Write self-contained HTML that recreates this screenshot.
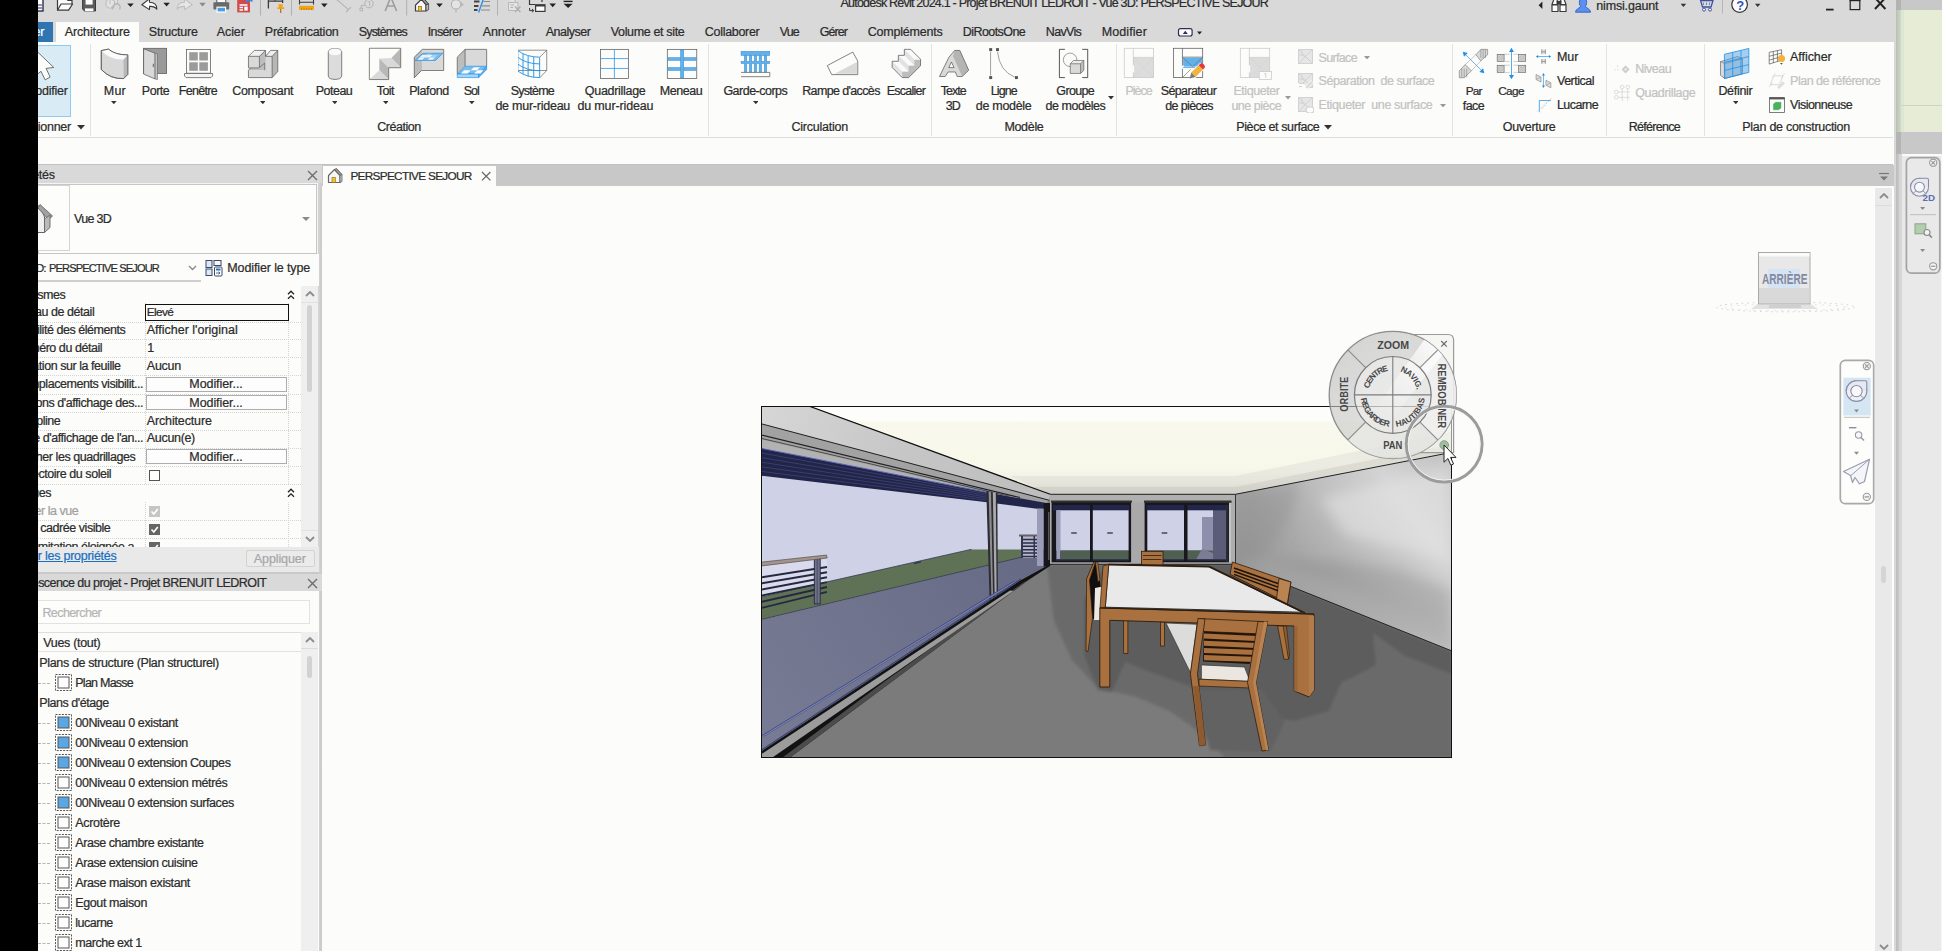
<!DOCTYPE html>
<html><head><meta charset="utf-8"><title>Revit</title>
<style>
html,body{margin:0;padding:0;}
body{width:1942px;height:951px;overflow:hidden;position:relative;background:#fcfcfa;font-family:"Liberation Sans",sans-serif;}
div,svg,span{position:absolute;}
.t{white-space:pre;line-height:16px;height:16px;-webkit-text-stroke:0.22px currentColor;}
</style></head><body>
<div style="left:0px;top:0px;width:1896px;height:42px;background:#d9d9d9;"></div>
<div style="left:1896px;top:0px;width:46px;height:10px;background:#c8c8c8;"></div>
<div style="left:1896px;top:0px;width:5px;height:10px;background:#b2b2b2;"></div>
<div style="left:1896px;top:10px;width:46px;height:122px;background:#e7ecd7;"></div>
<div style="left:1896px;top:10px;width:5px;height:122px;background:linear-gradient(90deg,#b3c2ae,#d3d8cb);"></div>
<div style="left:1901px;top:10px;width:3px;height:122px;background:#dde6d2;"></div>
<div style="left:1901px;top:104.6px;width:41px;height:1px;background:#cfd3c6;"></div>
<div style="left:1896px;top:132px;width:46px;height:22px;background:#c8c8c8;"></div>
<div style="left:1896px;top:132px;width:5px;height:22px;background:#b4b4b4;"></div>
<div style="left:1896px;top:154px;width:46px;height:797px;background:#e9e9e9;"></div>
<div style="left:1901px;top:154px;width:41px;height:1.6px;background:#fbfbfb;"></div>
<div style="left:1893.6px;top:42px;width:2.6px;height:909px;background:#d8d8d8;"></div>
<div style="left:1896px;top:154px;width:3.2px;height:797px;background:linear-gradient(90deg,#bcbcbc,#c9c9c9);"></div>
<div style="left:1899.2px;top:154px;width:2.8px;height:797px;background:#d6d6d6;"></div>
<div style="left:1941px;top:154px;width:1px;height:797px;background:#f6f6f6;"></div>
<div style="left:38px;top:42px;width:1855px;height:95px;background:#fcfcfa;"></div>
<div style="left:38px;top:137px;width:1855px;height:1px;background:#dcdcdc;"></div>
<div style="left:38px;top:138px;width:1855px;height:26px;background:#fcfcfa;"></div>
<div style="left:56px;top:22px;width:83px;height:21px;background:#fcfcfa;"></div>
<div style="left:38px;top:22px;width:15px;height:20px;background:#2e75b2;"></div>
<span class="t" style="left:33.5px;top:24.0px;font-size:12.5px;color:#fff;letter-spacing:-0.25px;">er</span>
<span class="t" style="left:64.8px;top:23.5px;font-size:12.5px;color:#2b2b2b;letter-spacing:-0.15px;">Architecture</span>
<span class="t" style="left:148.8px;top:23.5px;font-size:12.5px;color:#2b2b2b;letter-spacing:-0.21px;">Structure</span>
<span class="t" style="left:216.8px;top:23.5px;font-size:12.5px;color:#2b2b2b;letter-spacing:-0.12px;">Acier</span>
<span class="t" style="left:264.8px;top:23.5px;font-size:12.5px;color:#2b2b2b;letter-spacing:-0.24px;">Préfabrication</span>
<span class="t" style="left:358.8px;top:23.5px;font-size:12.5px;color:#2b2b2b;letter-spacing:-0.84px;">Systèmes</span>
<span class="t" style="left:427.8px;top:23.5px;font-size:12.5px;color:#2b2b2b;letter-spacing:-0.65px;">Insérer</span>
<span class="t" style="left:482.8px;top:23.5px;font-size:12.5px;color:#2b2b2b;letter-spacing:-0.13px;">Annoter</span>
<span class="t" style="left:545.8px;top:23.5px;font-size:12.5px;color:#2b2b2b;letter-spacing:-0.52px;">Analyser</span>
<span class="t" style="left:610.8px;top:23.5px;font-size:12.5px;color:#2b2b2b;letter-spacing:-0.35px;">Volume et site</span>
<span class="t" style="left:704.8px;top:23.5px;font-size:12.5px;color:#2b2b2b;letter-spacing:-0.30px;">Collaborer</span>
<span class="t" style="left:779.8px;top:23.5px;font-size:12.5px;color:#2b2b2b;letter-spacing:-0.89px;">Vue</span>
<span class="t" style="left:819.8px;top:23.5px;font-size:12.5px;color:#2b2b2b;letter-spacing:-0.99px;">Gérer</span>
<span class="t" style="left:867.8px;top:23.5px;font-size:12.5px;color:#2b2b2b;letter-spacing:-0.21px;">Compléments</span>
<span class="t" style="left:962.8px;top:23.5px;font-size:12.5px;color:#2b2b2b;letter-spacing:-0.57px;">DiRootsOne</span>
<span class="t" style="left:1045.8px;top:23.5px;font-size:12.5px;color:#2b2b2b;letter-spacing:-0.68px;">NavVis</span>
<span class="t" style="left:1101.8px;top:23.5px;font-size:12.5px;color:#2b2b2b;letter-spacing:0.08px;">Modifier</span>
<span class="t" style="left:840.5px;top:-4.8px;font-size:12.5px;color:#2b2b2b;letter-spacing:-0.78px;">Autodesk Revit 2024.1 - Projet BRENUIT LEDROIT - Vue 3D: PERSPECTIVE SEJOUR</span>
<span class="t" style="left:1596.3px;top:-2.5px;font-size:12.5px;color:#2b2b2b;letter-spacing:-0.17px;">nimsi.gaunt</span>
<div style="left:90.0px;top:44px;width:1px;height:92px;background:#e3e3e3;"></div>
<div style="left:708.0px;top:44px;width:1px;height:92px;background:#e3e3e3;"></div>
<div style="left:931.0px;top:44px;width:1px;height:92px;background:#e3e3e3;"></div>
<div style="left:1116.0px;top:44px;width:1px;height:92px;background:#e3e3e3;"></div>
<div style="left:1452.0px;top:44px;width:1px;height:92px;background:#e3e3e3;"></div>
<div style="left:1606.0px;top:44px;width:1px;height:92px;background:#e3e3e3;"></div>
<div style="left:1704.0px;top:44px;width:1px;height:92px;background:#e3e3e3;"></div>
<div style="left:38px;top:45px;width:33px;height:72px;background:#d9ebf4;border:1px solid #8ecbee;box-sizing:border-box;border-left:none;"></div>
<span class="t" style="left:25.1px;top:83.0px;font-size:12.5px;color:#2b2b2b;letter-spacing:-0.25px;">Modifier</span>
<span class="t" style="left:4.5px;top:119.0px;font-size:12.5px;color:#2b2b2b;letter-spacing:-0.25px;">Sélectionner</span>
<span class="t" style="left:103.8px;top:83.0px;font-size:12.5px;color:#2b2b2b;letter-spacing:0.23px;">Mur</span>
<svg style="left:111.2px;top:100.9px" width="5.6" height="3.2"><path d="M0 0H5.6L2.8 3.2Z" fill="#333"/></svg>
<span class="t" style="left:141.8px;top:83.0px;font-size:12.5px;color:#2b2b2b;letter-spacing:-0.47px;">Porte</span>
<span class="t" style="left:178.8px;top:83.0px;font-size:12.5px;color:#2b2b2b;letter-spacing:-0.68px;">Fenêtre</span>
<span class="t" style="left:232.2px;top:83.0px;font-size:12.5px;color:#2b2b2b;letter-spacing:-0.32px;">Composant</span>
<svg style="left:259.7px;top:100.9px" width="5.6" height="3.2"><path d="M0 0H5.6L2.8 3.2Z" fill="#333"/></svg>
<span class="t" style="left:315.8px;top:83.0px;font-size:12.5px;color:#2b2b2b;letter-spacing:-0.53px;">Poteau</span>
<svg style="left:331.7px;top:100.9px" width="5.6" height="3.2"><path d="M0 0H5.6L2.8 3.2Z" fill="#333"/></svg>
<span class="t" style="left:376.8px;top:83.0px;font-size:12.5px;color:#2b2b2b;letter-spacing:-0.62px;">Toit</span>
<svg style="left:382.7px;top:100.9px" width="5.6" height="3.2"><path d="M0 0H5.6L2.8 3.2Z" fill="#333"/></svg>
<span class="t" style="left:409.2px;top:83.0px;font-size:12.5px;color:#2b2b2b;letter-spacing:-0.40px;">Plafond</span>
<span class="t" style="left:463.8px;top:83.0px;font-size:12.5px;color:#2b2b2b;letter-spacing:-1.04px;">Sol</span>
<svg style="left:469.2px;top:100.9px" width="5.6" height="3.2"><path d="M0 0H5.6L2.8 3.2Z" fill="#333"/></svg>
<span class="t" style="left:510.8px;top:83.0px;font-size:12.5px;color:#2b2b2b;letter-spacing:-0.77px;">Système</span>
<span class="t" style="left:495.4px;top:98.0px;font-size:12.5px;color:#2b2b2b;letter-spacing:-0.24px;">de mur-rideau</span>
<span class="t" style="left:584.8px;top:83.0px;font-size:12.5px;color:#2b2b2b;letter-spacing:-0.29px;">Quadrillage</span>
<span class="t" style="left:577.4px;top:98.0px;font-size:12.5px;color:#2b2b2b;letter-spacing:-0.14px;">du mur-rideau</span>
<span class="t" style="left:659.8px;top:83.0px;font-size:12.5px;color:#2b2b2b;letter-spacing:-0.44px;">Meneau</span>
<span class="t" style="left:723.4px;top:83.0px;font-size:12.5px;color:#2b2b2b;letter-spacing:-0.51px;">Garde-corps</span>
<svg style="left:752.7px;top:100.9px" width="5.6" height="3.2"><path d="M0 0H5.6L2.8 3.2Z" fill="#333"/></svg>
<span class="t" style="left:802.2px;top:83.0px;font-size:12.5px;color:#2b2b2b;letter-spacing:-0.63px;">Rampe d&#x27;accès</span>
<span class="t" style="left:886.8px;top:83.0px;font-size:12.5px;color:#2b2b2b;letter-spacing:-0.78px;">Escalier</span>
<span class="t" style="left:940.8px;top:83.0px;font-size:12.5px;color:#2b2b2b;letter-spacing:-0.97px;">Texte</span>
<span class="t" style="left:945.8px;top:98.0px;font-size:12.5px;color:#2b2b2b;letter-spacing:-0.98px;">3D</span>
<span class="t" style="left:990.8px;top:83.0px;font-size:12.5px;color:#2b2b2b;letter-spacing:-0.90px;">Ligne</span>
<span class="t" style="left:975.8px;top:98.0px;font-size:12.5px;color:#2b2b2b;letter-spacing:-0.30px;">de modèle</span>
<span class="t" style="left:1056.3px;top:83.0px;font-size:12.5px;color:#2b2b2b;letter-spacing:-0.64px;">Groupe</span>
<span class="t" style="left:1045.6px;top:98.0px;font-size:12.5px;color:#2b2b2b;letter-spacing:-0.49px;">de modèles</span>
<svg style="left:1108.0px;top:96.25px" width="6" height="3.5"><path d="M0 0H6L3.0 3.5Z" fill="#333"/></svg>
<span class="t" style="left:1125.5px;top:83.0px;font-size:12.5px;color:#c2c2c2;letter-spacing:-1.02px;">Pièce</span>
<span class="t" style="left:1160.8px;top:83.0px;font-size:12.5px;color:#2b2b2b;letter-spacing:-0.65px;">Séparateur</span>
<span class="t" style="left:1165.3px;top:98.0px;font-size:12.5px;color:#2b2b2b;letter-spacing:-0.65px;">de pièces</span>
<span class="t" style="left:1233.4px;top:83.0px;font-size:12.5px;color:#c2c2c2;letter-spacing:-0.45px;">Etiqueter</span>
<span class="t" style="left:1231.4px;top:98.0px;font-size:12.5px;color:#c2c2c2;letter-spacing:-0.48px;">une pièce</span>
<svg style="left:1284.5px;top:96.25px" width="6" height="3.5"><path d="M0 0H6L3.0 3.5Z" fill="#999"/></svg>
<span class="t" style="left:1318.6px;top:49.5px;font-size:12.5px;color:#c2c2c2;letter-spacing:-0.67px;">Surface</span>
<svg style="left:1363.6px;top:55.75px" width="6" height="3.5"><path d="M0 0H6L3.0 3.5Z" fill="#999"/></svg>
<span class="t" style="left:1318.6px;top:73.0px;font-size:12.5px;color:#c2c2c2;letter-spacing:-0.46px;">Séparation  de surface</span>
<span class="t" style="left:1318.6px;top:97.0px;font-size:12.5px;color:#c2c2c2;letter-spacing:-0.39px;">Etiqueter  une surface</span>
<svg style="left:1440.0px;top:103.75px" width="6" height="3.5"><path d="M0 0H6L3.0 3.5Z" fill="#999"/></svg>
<span class="t" style="left:1465.8px;top:83.0px;font-size:11.8px;color:#2b2b2b;letter-spacing:-0.83px;">Par</span>
<span class="t" style="left:1462.8px;top:98.0px;font-size:12.5px;color:#2b2b2b;letter-spacing:-0.55px;">face</span>
<span class="t" style="left:1498.2px;top:83.0px;font-size:11.8px;color:#2b2b2b;letter-spacing:-0.61px;">Cage</span>
<span class="t" style="left:1557.0px;top:49.0px;font-size:12.5px;color:#2b2b2b;letter-spacing:-0.07px;">Mur</span>
<span class="t" style="left:1557.0px;top:73.0px;font-size:12.5px;color:#2b2b2b;letter-spacing:-0.49px;">Vertical</span>
<span class="t" style="left:1557.0px;top:97.0px;font-size:12.5px;color:#2b2b2b;letter-spacing:-0.58px;">Lucarne</span>
<span class="t" style="left:1635.2px;top:61.0px;font-size:12.5px;color:#c2c2c2;letter-spacing:-0.46px;">Niveau</span>
<span class="t" style="left:1635.2px;top:85.0px;font-size:12.5px;color:#c2c2c2;letter-spacing:-0.33px;">Quadrillage</span>
<span class="t" style="left:1718.4px;top:83.0px;font-size:12.5px;color:#2b2b2b;letter-spacing:-0.30px;">Définir</span>
<svg style="left:1732.6000000000001px;top:100.9px" width="5.6" height="3.2"><path d="M0 0H5.6L2.8 3.2Z" fill="#333"/></svg>
<span class="t" style="left:1790.1px;top:49.0px;font-size:12.5px;color:#2b2b2b;letter-spacing:-0.07px;">Afficher</span>
<span class="t" style="left:1790.1px;top:73.0px;font-size:12.5px;color:#c2c2c2;letter-spacing:-0.51px;">Plan de référence</span>
<span class="t" style="left:1790.1px;top:97.0px;font-size:12.5px;color:#2b2b2b;letter-spacing:-0.53px;">Visionneuse</span>
<svg style="left:76.5px;top:125.25px" width="8" height="4.5"><path d="M0 0H8L4.0 4.5Z" fill="#333"/></svg>
<span class="t" style="left:377.2px;top:119.0px;font-size:12.5px;color:#2b2b2b;letter-spacing:-0.46px;">Création</span>
<span class="t" style="left:791.5px;top:119.0px;font-size:12.5px;color:#2b2b2b;letter-spacing:-0.23px;">Circulation</span>
<span class="t" style="left:1004.4px;top:119.0px;font-size:12.5px;color:#2b2b2b;letter-spacing:-0.32px;">Modèle</span>
<span class="t" style="left:1236.3px;top:119.0px;font-size:12.5px;color:#2b2b2b;letter-spacing:-0.41px;">Pièce et surface</span>
<svg style="left:1324.0px;top:125.25px" width="8" height="4.5"><path d="M0 0H8L4.0 4.5Z" fill="#333"/></svg>
<span class="t" style="left:1502.8px;top:119.0px;font-size:12.5px;color:#2b2b2b;letter-spacing:-0.32px;">Ouverture</span>
<span class="t" style="left:1628.8px;top:119.0px;font-size:12.5px;color:#2b2b2b;letter-spacing:-0.71px;">Référence</span>
<span class="t" style="left:1742.3px;top:119.0px;font-size:12.5px;color:#2b2b2b;letter-spacing:-0.28px;">Plan de construction</span>
<div style="left:38px;top:164px;width:1855px;height:1px;background:#c2c2c2;"></div>
<div style="left:38px;top:165px;width:284px;height:18px;background:#d9d9d9;"></div>
<span class="t" style="left:0.3px;top:167.0px;font-size:12.5px;color:#2b2b2b;letter-spacing:-0.25px;">Propriétés</span>
<div style="left:38px;top:183px;width:281px;height:103px;background:#f4f4f4;"></div>
<div style="left:318px;top:183px;width:4px;height:768px;background:linear-gradient(90deg,#d6d6d6,#c9c9c9);"></div>
<div style="left:38px;top:183.5px;width:279px;height:70px;background:#fdfdfc;border:1px solid #c6c6c6;box-sizing:border-box;"></div>
<div style="left:38px;top:185px;width:32px;height:66px;background:#fdfdfc;border:1px solid #d4d4d4;box-sizing:border-box;border-left:none;"></div>
<span class="t" style="left:74.0px;top:210.7px;font-size:12.5px;color:#2b2b2b;letter-spacing:-0.69px;">Vue 3D</span>
<svg style="left:302.0px;top:217.0px" width="8" height="4"><path d="M0 0H8L4.0 4Z" fill="#8a8a8a"/></svg>
<div style="left:38px;top:254px;width:281px;height:32px;background:#fcfcfa;"></div>
<span class="t" style="left:49.0px;top:259.7px;font-size:11.100000000000001px;color:#2b2b2b;letter-spacing:-0.88px;">PERSPECTIVE SEJOUR</span>
<span class="t" style="left:9.8px;top:259.7px;font-size:11.8px;color:#2b2b2b;letter-spacing:-0.90px;">Vue 3D:</span>
<div style="left:38px;top:279.5px;width:163px;height:2px;background:#cfcfcf;"></div>
<span class="t" style="left:227.3px;top:259.7px;font-size:12.5px;color:#2b2b2b;letter-spacing:-0.12px;">Modifier le type</span>
<div style="left:38px;top:286px;width:263px;height:261px;background:#fcfcfa;"></div>
<div style="left:301px;top:286px;width:17px;height:261px;background:#efefef;"></div>
<div style="left:307px;top:304.5px;width:5px;height:87px;background:#d2d2d2;border-radius:2.5px;"></div>
<div style="left:301px;top:302px;width:17px;height:1px;background:#e2e2e2;"></div>
<div style="left:301px;top:530px;width:17px;height:1px;background:#e2e2e2;"></div>
<span class="t" style="left:11.8px;top:304.3px;font-size:12.5px;color:#2b2b2b;letter-spacing:-0.45px;">Niveau de détail</span>
<span class="t" style="left:12.3px;top:322.2px;font-size:12.5px;color:#2b2b2b;letter-spacing:-0.45px;">Visibilité des éléments</span>
<span class="t" style="left:14.1px;top:339.8px;font-size:12.5px;color:#2b2b2b;letter-spacing:-0.45px;">Numéro du détail</span>
<span class="t" style="left:14.2px;top:358.0px;font-size:12.5px;color:#2b2b2b;letter-spacing:-0.45px;">Rotation sur la feuille</span>
<span class="t" style="left:13.8px;top:376.4px;font-size:12.5px;color:#2b2b2b;letter-spacing:-0.45px;">Remplacements visibilit...</span>
<span class="t" style="left:14.4px;top:394.6px;font-size:12.5px;color:#2b2b2b;letter-spacing:-0.45px;">Options d&#x27;affichage des...</span>
<span class="t" style="left:11.3px;top:412.5px;font-size:12.5px;color:#2b2b2b;letter-spacing:-0.45px;">Discipline</span>
<span class="t" style="left:14.3px;top:430.0px;font-size:12.5px;color:#2b2b2b;letter-spacing:-0.45px;">Style d&#x27;affichage de l&#x27;an...</span>
<span class="t" style="left:14.0px;top:448.5px;font-size:12.5px;color:#2b2b2b;letter-spacing:-0.45px;">Afficher les quadrillages</span>
<span class="t" style="left:12.7px;top:466.4px;font-size:12.5px;color:#2b2b2b;letter-spacing:-0.45px;">Trajectoire du soleil</span>
<span class="t" style="left:2.5px;top:287.0px;font-size:12.5px;color:#2b2b2b;letter-spacing:-0.45px;">Graphismes</span>
<span class="t" style="left:1.9px;top:485.0px;font-size:12.5px;color:#2b2b2b;letter-spacing:-0.45px;">Etendues</span>
<span class="t" style="left:9.2px;top:502.5px;font-size:12.5px;color:#a0a0a0;letter-spacing:-0.45px;">Cadrer la vue</span>
<span class="t" style="left:10.5px;top:520.3px;font-size:12.5px;color:#2b2b2b;letter-spacing:-0.45px;">Zone cadrée visible</span>
<span class="t" style="left:18.0px;top:539.0px;font-size:12.5px;color:#2b2b2b;letter-spacing:-0.45px;">Délimitation éloignée a...</span>
<span class="t" style="left:146.8px;top:322.2px;font-size:12.5px;color:#2b2b2b;letter-spacing:-0.01px;">Afficher l&#x27;original</span>
<span class="t" style="left:147.3px;top:339.8px;font-size:12.5px;color:#2b2b2b;letter-spacing:-0.25px;">1</span>
<span class="t" style="left:146.8px;top:358.0px;font-size:12.5px;color:#2b2b2b;letter-spacing:-0.24px;">Aucun</span>
<span class="t" style="left:146.8px;top:412.5px;font-size:12.5px;color:#2b2b2b;letter-spacing:-0.15px;">Architecture</span>
<span class="t" style="left:146.8px;top:430.0px;font-size:12.5px;color:#2b2b2b;letter-spacing:-0.32px;">Aucun(e)</span>
<div style="left:146px;top:377.2px;width:141px;height:14.6px;background:#fdfdfd;border:1px solid #adadad;box-sizing:border-box;"></div>
<span class="t" style="left:189.3px;top:376.4px;font-size:12.5px;color:#2b2b2b;letter-spacing:-0.07px;">Modifier...</span>
<div style="left:146px;top:395.40000000000003px;width:141px;height:14.6px;background:#fdfdfd;border:1px solid #adadad;box-sizing:border-box;"></div>
<span class="t" style="left:189.3px;top:394.6px;font-size:12.5px;color:#2b2b2b;letter-spacing:-0.07px;">Modifier...</span>
<div style="left:146px;top:449.3px;width:141px;height:14.6px;background:#fdfdfd;border:1px solid #adadad;box-sizing:border-box;"></div>
<span class="t" style="left:189.3px;top:448.5px;font-size:12.5px;color:#2b2b2b;letter-spacing:-0.07px;">Modifier...</span>
<div style="left:38px;top:321.5px;width:263px;height:1px;border-top:1px dotted #d4d4d4;"></div>
<div style="left:38px;top:339px;width:263px;height:1px;border-top:1px dotted #d4d4d4;"></div>
<div style="left:38px;top:357px;width:263px;height:1px;border-top:1px dotted #d4d4d4;"></div>
<div style="left:38px;top:375px;width:263px;height:1px;border-top:1px dotted #d4d4d4;"></div>
<div style="left:38px;top:393.5px;width:263px;height:1px;border-top:1px dotted #d4d4d4;"></div>
<div style="left:38px;top:411.5px;width:263px;height:1px;border-top:1px dotted #d4d4d4;"></div>
<div style="left:38px;top:429.5px;width:263px;height:1px;border-top:1px dotted #d4d4d4;"></div>
<div style="left:38px;top:447.5px;width:263px;height:1px;border-top:1px dotted #d4d4d4;"></div>
<div style="left:38px;top:465.5px;width:263px;height:1px;border-top:1px dotted #d4d4d4;"></div>
<div style="left:38px;top:483.5px;width:263px;height:1px;border-top:1px dotted #d4d4d4;"></div>
<div style="left:38px;top:519.5px;width:263px;height:1px;border-top:1px dotted #d4d4d4;"></div>
<div style="left:38px;top:537.5px;width:263px;height:1px;border-top:1px dotted #d4d4d4;"></div>
<div style="left:144.5px;top:303px;width:1px;height:181px;border-left:1px dotted #d4d4d4;"></div>
<div style="left:288px;top:303px;width:1px;height:181px;border-left:1px dotted #d4d4d4;"></div>
<div style="left:144.5px;top:502px;width:1px;height:45px;border-left:1px dotted #d4d4d4;"></div>
<div style="left:288px;top:502px;width:1px;height:45px;border-left:1px dotted #d4d4d4;"></div>
<div style="left:144.5px;top:304px;width:144px;height:17px;background:#fcfcfa;border:1.5px solid #111;box-sizing:border-box;"></div>
<span class="t" style="left:146.8px;top:304.3px;font-size:11.8px;color:#2b2b2b;letter-spacing:-0.63px;">Elevé</span>
<div style="left:149px;top:470px;width:11px;height:11px;background:#fff;border:1px solid #555;box-sizing:border-box;"></div>
<div style="left:149px;top:506px;width:11px;height:11px;background:#c6c6c6;"></div>
<div style="left:149px;top:524px;width:11px;height:11px;background:#666;"></div>
<div style="left:149px;top:542px;width:11px;height:6px;background:#666;"></div>
<svg style="left:149px;top:506px" width="11" height="11"><path d="M2.5 5.5L4.8 8L8.8 3" stroke="#fff" stroke-width="1.6" fill="none"/></svg>
<svg style="left:149px;top:524px" width="11" height="11"><path d="M2.5 5.5L4.8 8L8.8 3" stroke="#fff" stroke-width="1.6" fill="none"/></svg>
<svg style="left:149px;top:542px" width="11" height="11"><path d="M2.5 5.5L4.8 8L8.8 3" stroke="#fff" stroke-width="1.6" fill="none"/></svg>
<div style="left:38px;top:547px;width:281px;height:25px;background:#e9e9e9;"></div>
<span class="t" style="left:-2.1px;top:547.6px;font-size:12.5px;color:#1a6fc0;letter-spacing:-0.25px;text-decoration:underline;">Aide sur les propriétés</span>
<div style="left:245.5px;top:549.5px;width:69.5px;height:17px;background:#ebebeb;border:1px solid #d2d2d2;box-sizing:border-box;border-radius:2px;"></div>
<span class="t" style="left:253.8px;top:550.5px;font-size:12.5px;color:#a6a6a6;letter-spacing:-0.10px;">Appliquer</span>
<div style="left:38px;top:572px;width:281px;height:2px;background:#c9c9c9;"></div>
<div style="left:38px;top:574px;width:284px;height:17px;background:#d9d9d9;"></div>
<span class="t" style="left:4.0px;top:574.9px;font-size:12.5px;color:#2b2b2b;letter-spacing:-0.56px;">Arborescence du projet - Projet BRENUIT LEDROIT</span>
<div style="left:38px;top:591px;width:281px;height:360px;background:#fcfcfa;"></div>
<div style="left:38px;top:599.5px;width:272px;height:24px;background:#fdfdfc;border:1px solid #e2e2e2;box-sizing:border-box;border-left:none;"></div>
<span class="t" style="left:42.4px;top:604.8px;font-size:12.5px;color:#b4b4b4;letter-spacing:-0.58px;">Rechercher</span>
<div style="left:38px;top:632px;width:263px;height:1px;background:#dedede;"></div>
<div style="left:38px;top:651px;width:263px;height:1px;background:#e2e2e2;"></div>
<div style="left:301px;top:632px;width:17px;height:319px;background:#efefef;"></div>
<div style="left:301px;top:648px;width:17px;height:1px;background:#dcdcdc;"></div>
<div style="left:307px;top:655.5px;width:5px;height:22px;background:#d2d2d2;border-radius:2.5px;"></div>
<span class="t" style="left:43.2px;top:634.8px;font-size:12.5px;color:#2b2b2b;letter-spacing:-0.31px;">Vues (tout)</span>
<span class="t" style="left:39.3px;top:655.3px;font-size:12.5px;color:#2b2b2b;letter-spacing:-0.36px;">Plans de structure (Plan structurel)</span>
<span class="t" style="left:39.3px;top:694.7px;font-size:12.5px;color:#2b2b2b;letter-spacing:-0.46px;">Plans d&#x27;étage</span>
<span class="t" style="left:75.3px;top:674.7px;font-size:12.5px;color:#2b2b2b;letter-spacing:-0.76px;">Plan Masse</span>
<div style="left:38px;top:682.7px;width:12px;height:1px;border-top:1px dashed #b5b5b5;"></div>
<svg style="left:55px;top:674.2px" width="17" height="17"><rect x="0.5" y="0.5" width="16" height="16" fill="#fff" stroke="#555" stroke-width="1" stroke-dasharray="2 1.2"/><rect x="3" y="3" width="11" height="11" fill="#fdfdfd" stroke="#555" stroke-width="1"/></svg>
<span class="t" style="left:75.3px;top:714.7px;font-size:12.5px;color:#2b2b2b;letter-spacing:-0.38px;">00Niveau 0 existant</span>
<div style="left:38px;top:722.7px;width:12px;height:1px;border-top:1px dashed #b5b5b5;"></div>
<svg style="left:55px;top:714.2px" width="17" height="17"><rect x="0.5" y="0.5" width="16" height="16" fill="#fff" stroke="#555" stroke-width="1" stroke-dasharray="2 1.2"/><rect x="3" y="3" width="11" height="11" fill="#5aa7e6" stroke="#555" stroke-width="1"/></svg>
<span class="t" style="left:75.3px;top:734.7px;font-size:12.5px;color:#2b2b2b;letter-spacing:-0.38px;">00Niveau 0 extension</span>
<div style="left:38px;top:742.7px;width:12px;height:1px;border-top:1px dashed #b5b5b5;"></div>
<svg style="left:55px;top:734.2px" width="17" height="17"><rect x="0.5" y="0.5" width="16" height="16" fill="#fff" stroke="#555" stroke-width="1" stroke-dasharray="2 1.2"/><rect x="3" y="3" width="11" height="11" fill="#5aa7e6" stroke="#555" stroke-width="1"/></svg>
<span class="t" style="left:75.3px;top:754.7px;font-size:12.5px;color:#2b2b2b;letter-spacing:-0.43px;">00Niveau 0 extension Coupes</span>
<div style="left:38px;top:762.7px;width:12px;height:1px;border-top:1px dashed #b5b5b5;"></div>
<svg style="left:55px;top:754.2px" width="17" height="17"><rect x="0.5" y="0.5" width="16" height="16" fill="#fff" stroke="#555" stroke-width="1" stroke-dasharray="2 1.2"/><rect x="3" y="3" width="11" height="11" fill="#5aa7e6" stroke="#555" stroke-width="1"/></svg>
<span class="t" style="left:75.3px;top:774.7px;font-size:12.5px;color:#2b2b2b;letter-spacing:-0.36px;">00Niveau 0 extension métrés</span>
<div style="left:38px;top:782.7px;width:12px;height:1px;border-top:1px dashed #b5b5b5;"></div>
<svg style="left:55px;top:774.2px" width="17" height="17"><rect x="0.5" y="0.5" width="16" height="16" fill="#fff" stroke="#555" stroke-width="1" stroke-dasharray="2 1.2"/><rect x="3" y="3" width="11" height="11" fill="#fdfdfd" stroke="#555" stroke-width="1"/></svg>
<span class="t" style="left:75.3px;top:794.7px;font-size:12.5px;color:#2b2b2b;letter-spacing:-0.43px;">00Niveau 0 extension surfaces</span>
<div style="left:38px;top:802.7px;width:12px;height:1px;border-top:1px dashed #b5b5b5;"></div>
<svg style="left:55px;top:794.2px" width="17" height="17"><rect x="0.5" y="0.5" width="16" height="16" fill="#fff" stroke="#555" stroke-width="1" stroke-dasharray="2 1.2"/><rect x="3" y="3" width="11" height="11" fill="#5aa7e6" stroke="#555" stroke-width="1"/></svg>
<span class="t" style="left:75.3px;top:814.7px;font-size:12.5px;color:#2b2b2b;letter-spacing:-0.32px;">Acrotère</span>
<div style="left:38px;top:822.7px;width:12px;height:1px;border-top:1px dashed #b5b5b5;"></div>
<svg style="left:55px;top:814.2px" width="17" height="17"><rect x="0.5" y="0.5" width="16" height="16" fill="#fff" stroke="#555" stroke-width="1" stroke-dasharray="2 1.2"/><rect x="3" y="3" width="11" height="11" fill="#fdfdfd" stroke="#555" stroke-width="1"/></svg>
<span class="t" style="left:75.3px;top:834.7px;font-size:12.5px;color:#2b2b2b;letter-spacing:-0.44px;">Arase chambre existante</span>
<div style="left:38px;top:842.7px;width:12px;height:1px;border-top:1px dashed #b5b5b5;"></div>
<svg style="left:55px;top:834.2px" width="17" height="17"><rect x="0.5" y="0.5" width="16" height="16" fill="#fff" stroke="#555" stroke-width="1" stroke-dasharray="2 1.2"/><rect x="3" y="3" width="11" height="11" fill="#fdfdfd" stroke="#555" stroke-width="1"/></svg>
<span class="t" style="left:75.3px;top:854.7px;font-size:12.5px;color:#2b2b2b;letter-spacing:-0.43px;">Arase extension cuisine</span>
<div style="left:38px;top:862.7px;width:12px;height:1px;border-top:1px dashed #b5b5b5;"></div>
<svg style="left:55px;top:854.2px" width="17" height="17"><rect x="0.5" y="0.5" width="16" height="16" fill="#fff" stroke="#555" stroke-width="1" stroke-dasharray="2 1.2"/><rect x="3" y="3" width="11" height="11" fill="#fdfdfd" stroke="#555" stroke-width="1"/></svg>
<span class="t" style="left:75.3px;top:874.7px;font-size:12.5px;color:#2b2b2b;letter-spacing:-0.40px;">Arase maison existant</span>
<div style="left:38px;top:882.7px;width:12px;height:1px;border-top:1px dashed #b5b5b5;"></div>
<svg style="left:55px;top:874.2px" width="17" height="17"><rect x="0.5" y="0.5" width="16" height="16" fill="#fff" stroke="#555" stroke-width="1" stroke-dasharray="2 1.2"/><rect x="3" y="3" width="11" height="11" fill="#fdfdfd" stroke="#555" stroke-width="1"/></svg>
<span class="t" style="left:75.3px;top:894.7px;font-size:12.5px;color:#2b2b2b;letter-spacing:-0.40px;">Egout maison</span>
<div style="left:38px;top:902.7px;width:12px;height:1px;border-top:1px dashed #b5b5b5;"></div>
<svg style="left:55px;top:894.2px" width="17" height="17"><rect x="0.5" y="0.5" width="16" height="16" fill="#fff" stroke="#555" stroke-width="1" stroke-dasharray="2 1.2"/><rect x="3" y="3" width="11" height="11" fill="#fdfdfd" stroke="#555" stroke-width="1"/></svg>
<span class="t" style="left:75.3px;top:914.7px;font-size:12.5px;color:#2b2b2b;letter-spacing:-0.50px;">lucarne</span>
<div style="left:38px;top:922.7px;width:12px;height:1px;border-top:1px dashed #b5b5b5;"></div>
<svg style="left:55px;top:914.2px" width="17" height="17"><rect x="0.5" y="0.5" width="16" height="16" fill="#fff" stroke="#555" stroke-width="1" stroke-dasharray="2 1.2"/><rect x="3" y="3" width="11" height="11" fill="#fdfdfd" stroke="#555" stroke-width="1"/></svg>
<span class="t" style="left:75.3px;top:934.7px;font-size:12.5px;color:#2b2b2b;letter-spacing:-0.48px;">marche ext 1</span>
<div style="left:38px;top:942.7px;width:12px;height:1px;border-top:1px dashed #b5b5b5;"></div>
<svg style="left:55px;top:934.2px" width="17" height="17"><rect x="0.5" y="0.5" width="16" height="16" fill="#fff" stroke="#555" stroke-width="1" stroke-dasharray="2 1.2"/><rect x="3" y="3" width="11" height="11" fill="#fdfdfd" stroke="#555" stroke-width="1"/></svg>
<div style="left:322px;top:164.5px;width:1572px;height:21.5px;background:#c8c8c8;"></div>
<div style="left:322.5px;top:166px;width:173.5px;height:20px;background:#fcfcfa;"></div>
<span class="t" style="left:350.4px;top:168.3px;font-size:11.8px;color:#2b2b2b;letter-spacing:-0.69px;">PERSPECTIVE SEJOUR</span>
<div style="left:1875px;top:188px;width:17px;height:763px;background:#e9e9e9;"></div>
<div style="left:1875px;top:205px;width:17px;height:1px;background:#dcdcdc;"></div>
<div style="left:1881px;top:566px;width:5px;height:17px;background:#d5d5d5;border-radius:2.5px;"></div>
<svg style="left:38px;top:44px" width="160" height="40" viewBox="0 0 1942 486"><path d="M-60 45 L190 285 L97 296 L146 402 L86 436 L36 332 L-40 392 Z" fill="#fcfcfb" stroke="#444" stroke-width="9" stroke-linejoin="miter"/><path d="M768 80 L855 62 Q940 135 1090 132 L1090 370 L1040 420 Q880 430 768 310 Z" fill="#d9d9d9" stroke="#5a5a5a" stroke-width="9" stroke-linejoin="round"/><path d="M1038 190 L1090 132 L1090 370 L1040 420 Z" fill="#b7b7b7"/><path d="M773 84 L853 67 Q940 140 1084 137 L1036 188 Q880 195 773 84 Z" fill="#fbfbfb"/><path d="M768 80 L855 62 Q940 135 1090 132 L1090 370 L1040 420 Q880 430 768 310 Z" fill="none" stroke="#5a5a5a" stroke-width="9" stroke-linejoin="round"/><rect x="1282" y="52" width="280" height="306" fill="#9a9a9a" stroke="#5a5a5a" stroke-width="9" /><polygon points="1282,58 1422,112 1422,425 1282,365" fill="#d9d9d9" stroke="#5a5a5a" stroke-width="9" stroke-linejoin="round" /><polygon points="1422,112 1450,122 1450,432 1422,425" fill="#c6c6c6" stroke="#5a5a5a" stroke-width="7" stroke-linejoin="round" /><rect x="1394" y="240" width="11" height="40" fill="#555" /></svg>
<svg style="left:180px;top:44px" width="40" height="40" viewBox="1800 440 400 400"><rect x="1865" y="495" width="241" height="237" fill="#fcfcfb" stroke="#5a5a5a" stroke-width="7.5" /><rect x="1892" y="522" width="86" height="83" fill="#9b9b9b" /><rect x="1892" y="623" width="86" height="85" fill="#9b9b9b" /><rect x="1993" y="522" width="86" height="83" fill="#9b9b9b" /><rect x="1993" y="623" width="86" height="85" fill="#9b9b9b" /><path d="M1845 735 H2126 V760 L2110 776 H1861 L1845 760 Z" fill="#f4f4f4" stroke="#5a5a5a" stroke-width="7.5"/></svg>
<svg style="left:198px;top:44px" width="160" height="40" viewBox="0 0 1942 486"><polygon points="612,318 810,318 810,150 900,150 900,408 612,408" fill="#d9d9d9" /><polygon points="810,150 880,78 968,78 900,150" fill="#efefef" /><polygon points="900,150 968,78 968,335 900,408" fill="#b7b7b7" /><polygon points="612,318 640,290 745,290 810,232 810,318" fill="#bdbdbd" /><polygon points="612,150 745,150 745,285 612,285" fill="#d9d9d9" /><polygon points="612,150 685,78 820,78 745,150" fill="#f0f0f0" /><polygon points="745,150 820,78 820,225 745,285" fill="#bdbdbd" /><path d="M612 150 L685 78 H820 V150 L880 78 H968 V335 L900 408 H612 V318 L640 290 H612 Z M612 150 H745 V285 M745 150 L820 78 M745 285 L810 232 V318 M900 150 V408 M900 150 L968 78 M900 150 H820 M640 290 H745" fill="none" stroke="#5a5a5a" stroke-width="9" stroke-linejoin="round"/><path d="M1582 95 A82 45 0 0 1 1745 95 V390 A82 45 0 0 1 1582 390 Z" fill="#dcdcdc" stroke="#5a5a5a" stroke-width="9"/><ellipse cx="1663" cy="96" rx="76" ry="40" fill="#fafafa"/></svg>
<svg style="left:358px;top:44px" width="160" height="40" viewBox="0 0 1942 486"><polygon points="137,52 518,52 518,288 372,288 372,432 137,432" fill="#fcfcfb" /><polygon points="518,52 518,288 405,170" fill="#b8b8b8" /><polygon points="258,175 405,170 518,288 372,288" fill="#d9d9d9" /><polygon points="258,175 372,288 372,432 258,318" fill="#b8b8b8" /><polygon points="137,432 372,432 258,318" fill="#d9d9d9" /><polygon points="137,52 518,52 518,288 372,288 372,432 137,432" fill="none" stroke="#5a5a5a" stroke-width="9" stroke-linejoin="round" /><polygon points="683,160 780,65 1040,65 1040,322 770,322 683,410" fill="#d9d9d9" /><polygon points="683,160 775,70 775,322 683,410" fill="#bdbdbd" /><polygon points="683,160 780,65 1040,65 1040,322 770,322 683,410" fill="none" stroke="#5a5a5a" stroke-width="9" stroke-linejoin="round" /><polygon points="692,200 790,112 1030,112 940,200" fill="#79bdee" stroke="#1e8fe6" stroke-width="8" stroke-linejoin="round" /><polygon points="745,165 780,135 845,135 810,165" fill="#eef3f6" /><polygon points="870,165 905,135 965,135 930,165" fill="#a5d2f2" /><polygon points="810,135 845,118 905,118 870,135" fill="#a5d2f2" /><polygon points="810,165 845,135 905,135 870,165" fill="#eef3f6" /><polygon points="720,192 750,165 810,165 780,192" fill="#eef3f6" /><polygon points="845,192 875,165 935,165 905,192" fill="#eef3f6" /><polygon points="1300,65 1562,65 1562,270 1300,270" fill="#d9d9d9" /><polygon points="1205,160 1300,65 1300,270 1205,365" fill="#bdbdbd" /><path d="M1205 365 V160 L1300 65 H1562 V270 M1300 65 V270" fill="none" stroke="#5a5a5a" stroke-width="9" stroke-linejoin="round"/><polygon points="1205,365 1300,270 1562,270 1465,365" fill="#79bdee" stroke="#1e8fe6" stroke-width="8" stroke-linejoin="round" /><polygon points="1205,365 1465,365 1465,408 1205,408" fill="#a9d4f5" stroke="#1e8fe6" stroke-width="8" stroke-linejoin="round" /><polygon points="1465,365 1562,270 1562,310 1465,408" fill="#5aaae8" stroke="#1e8fe6" stroke-width="8" stroke-linejoin="round" /><polygon points="1250,358 1290,318 1370,318 1330,358" fill="#fdfdfd" /><polygon points="1410,358 1450,318 1525,318 1485,358" fill="#fdfdfd" /><polygon points="1370,318 1405,283 1480,283 1445,318" fill="#fdfdfd" /></svg>
<svg style="left:518px;top:44px" width="160" height="40" viewBox="0 0 1942 486"><path d="M-5 75 H348 V322 L265 408 M348 75 L265 158 M-5 322 H348" fill="none" stroke="#5a5a5a" stroke-width="8"/><path d="M-5 78 Q100 160 262 160" fill="none" stroke="#1e8fe6" stroke-width="11"/><path d="M-5 160 Q100 242 262 242" fill="none" stroke="#1e8fe6" stroke-width="11"/><path d="M-5 243 Q100 325 262 325" fill="none" stroke="#1e8fe6" stroke-width="11"/><path d="M-5 326 Q100 408 262 408" fill="none" stroke="#1e8fe6" stroke-width="11"/><line x1="-3" y1="78" x2="-3" y2="326" stroke="#1e8fe6" stroke-width="11" /><line x1="60" y1="118" x2="60" y2="366" stroke="#1e8fe6" stroke-width="11" /><line x1="122" y1="145" x2="122" y2="393" stroke="#1e8fe6" stroke-width="11" /><line x1="190" y1="158" x2="190" y2="406" stroke="#1e8fe6" stroke-width="11" /><line x1="262" y1="160" x2="262" y2="408" stroke="#1e8fe6" stroke-width="11" /><rect x="1000" y="65" width="342" height="355" fill="#fcfcfb" stroke="#5a5a5a" stroke-width="9" /><line x1="1170" y1="70" x2="1170" y2="415" stroke="#1e8fe6" stroke-width="9" /><line x1="1005" y1="177" x2="1338" y2="177" stroke="#1e8fe6" stroke-width="9" /><line x1="1005" y1="297" x2="1338" y2="297" stroke="#1e8fe6" stroke-width="9" /></svg>
<svg style="left:658px;top:44px" width="160" height="40" viewBox="0 0 1942 486"><rect x="112" y="65" width="358" height="355" fill="#fcfcfb" stroke="#5a5a5a" stroke-width="9" /><rect x="120" y="165" width="342" height="35" fill="#63b1e9" stroke="#3b8fd3" stroke-width="6" /><rect x="120" y="285" width="342" height="37" fill="#63b1e9" stroke="#3b8fd3" stroke-width="6" /><rect x="272" y="72" width="40" height="340" fill="#63b1e9" stroke="#3b8fd3" stroke-width="6" /><rect x="1048" y="140" width="30" height="205" fill="#63b1e9" stroke="#3b8fd3" stroke-width="6" /><rect x="1108" y="140" width="30" height="205" fill="#63b1e9" stroke="#3b8fd3" stroke-width="6" /><rect x="1168" y="140" width="30" height="205" fill="#63b1e9" stroke="#3b8fd3" stroke-width="6" /><rect x="1228" y="140" width="30" height="205" fill="#63b1e9" stroke="#3b8fd3" stroke-width="6" /><rect x="1290" y="140" width="30" height="205" fill="#63b1e9" stroke="#3b8fd3" stroke-width="6" /><rect x="1008" y="210" width="349" height="28" fill="#63b1e9" stroke="#3b8fd3" stroke-width="6" /><rect x="1053" y="205" width="20" height="40" fill="#63b1e9" /><rect x="1113" y="205" width="20" height="40" fill="#63b1e9" /><rect x="1173" y="205" width="20" height="40" fill="#63b1e9" /><rect x="1233" y="205" width="20" height="40" fill="#63b1e9" /><rect x="1295" y="205" width="20" height="40" fill="#63b1e9" /><rect x="1008" y="88" width="349" height="52" fill="#63b1e9" stroke="#3b8fd3" stroke-width="6" /><path d="M1008 345 H1357 V397 H1008" fill="#fcfcfb" stroke="#5a5a5a" stroke-width="9"/></svg>
<svg style="left:818px;top:44px" width="160" height="40" viewBox="0 0 1942 486"><polygon points="112,262 422,98 482,208 482,372 165,372" fill="#fcfcfb" stroke="#5a5a5a" stroke-width="9" stroke-linejoin="round" /><polygon points="200,360 472,218 472,362" fill="#d9d9d9" /><polygon points="900,210 975,210 975,138 1048,138 1048,65 1125,65 1245,185 1245,265 1100,408 1022,408 900,285" fill="#e2e2e2" /><polygon points="1022,335 1100,335 1100,262 1170,262 1170,190 1245,190 1245,265 1100,408 1022,408" fill="#bdbdbd" /><polygon points="1048,65 1125,65 1245,188 1170,188" fill="#fafafa" /><polygon points="975,138 1048,138 1170,262 1100,262" fill="#fafafa" /><polygon points="900,210 975,210 1100,335 1022,335" fill="#fafafa" /><polygon points="900,210 975,210 975,138 1048,138 1048,65 1125,65 1245,185 1245,265 1100,408 1022,408 900,285" fill="none" stroke="#5a5a5a" stroke-width="9" stroke-linejoin="round" /><polygon points="1475,395 1590,160 1660,78 1722,78 1830,318 1750,395 1690,395 1668,340 1580,340 1545,395" fill="#d9d9d9" /><polygon points="1660,78 1722,78 1830,318 1750,395 1640,150" fill="#b5b5b5" /><polygon points="1475,395 1590,160 1660,78 1722,78 1830,318 1750,395 1690,395 1668,340 1580,340 1545,395" fill="none" stroke="#5a5a5a" stroke-width="9" stroke-linejoin="round" /><polygon points="1588,287 1620,218 1652,287" fill="#fcfcfb" stroke="#5a5a5a" stroke-width="9" stroke-linejoin="round" /></svg>
<svg style="left:978px;top:44px" width="160" height="40" viewBox="0 0 1942 486"><rect x="135" y="50" width="36" height="36" fill="#555" /><rect x="218" y="50" width="36" height="36" fill="#555" /><rect x="135" y="390" width="36" height="36" fill="#555" /><rect x="448" y="390" width="36" height="36" fill="#555" /><line x1="152" y1="95" x2="152" y2="385" stroke="#5a5a5a" stroke-width="7" /><path d="M236 95 Q262 330 445 402" fill="none" stroke="#5a5a5a" stroke-width="7"/><path d="M1055 65 H988 V408 H1055 M1265 65 H1332 V408 H1265" fill="none" stroke="#333" stroke-width="10"/><circle cx="1118" cy="192" r="82" fill="#fbfbfb" stroke="#5a5a5a" stroke-width="7"/><polygon points="1120,240 1245,240 1245,358 1120,358" fill="#d9d9d9" /><polygon points="1245,240 1285,200 1285,320 1245,358" fill="#bdbdbd" /><polygon points="1120,240 1160,200 1285,200 1245,240" fill="#ececec" /><path d="M1120 240 L1160 200 H1285 V320 L1245 358 H1120 Z M1120 240 H1245 V358 M1245 240 L1285 200" fill="none" stroke="#5a5a5a" stroke-width="8" stroke-linejoin="round"/></svg>
<svg style="left:1118px;top:44px" width="160" height="40" viewBox="0 0 1942 486"><rect x="75" y="52" width="357" height="356" fill="#fcfcfb" stroke="#c9c9c9" stroke-width="9" /><rect x="190" y="160" width="242" height="248" fill="#dcdcdc" stroke="#c9c9c9" stroke-width="6" /><line x1="185" y1="52" x2="185" y2="408" stroke="#c9c9c9" stroke-width="9" /><line x1="190" y1="160" x2="432" y2="408" stroke="#c9c9c9" stroke-width="4" /><line x1="432" y1="160" x2="190" y2="408" stroke="#c9c9c9" stroke-width="4" /><rect x="175" y="258" width="20" height="87" fill="#fcfcfb" /><rect x="672" y="52" width="356" height="356" fill="#fcfcfb" stroke="#5a5a5a" stroke-width="9" /><line x1="782" y1="52" x2="782" y2="408" stroke="#5a5a5a" stroke-width="9" /><line x1="782" y1="160" x2="1028" y2="160" stroke="#5a5a5a" stroke-width="9" /><rect x="790" y="168" width="232" height="107" fill="#63b1e9" /><line x1="790" y1="168" x2="905" y2="275" stroke="#5a5a5a" stroke-width="6" /><line x1="1022" y1="168" x2="905" y2="275" stroke="#5a5a5a" stroke-width="6" /><rect x="770" y="262" width="30" height="38" fill="#fcfcfb" /><line x1="790" y1="285" x2="935" y2="285" stroke="#1e8fe6" stroke-width="8" /><line x1="790" y1="400" x2="880" y2="310" stroke="#5a5a5a" stroke-width="7" /><g transform="rotate(-45 950 335) translate(950 338) scale(1.16) translate(-950 -338)"><rect x="860" y="300" width="185" height="76" fill="#fff" /><rect x="905" y="306" width="110" height="64" fill="#f1b53f"/><path d="M1015 306 h12 a32 32 0 0 1 0 64 h-12 Z" fill="#e8343a"/><path d="M905 306 L850 338 L905 370 Z" fill="#7a7a7a"/></g><rect x="1485" y="52" width="357" height="356" fill="#fcfcfb" stroke="#c9c9c9" stroke-width="9" /><rect x="1600" y="160" width="242" height="248" fill="#dcdcdc" stroke="#c9c9c9" stroke-width="6" /><line x1="1595" y1="52" x2="1595" y2="408" stroke="#c9c9c9" stroke-width="9" /><line x1="1600" y1="160" x2="1842" y2="408" stroke="#c9c9c9" stroke-width="4" /><line x1="1842" y1="160" x2="1600" y2="408" stroke="#c9c9c9" stroke-width="4" /><rect x="1585" y="258" width="20" height="87" fill="#fcfcfb" /><rect x="1715" y="335" width="150" height="97" fill="#fcfcfb" stroke="#c9c9c9" stroke-width="9" /><path d="M1775 365 L1795 355 V412" fill="none" stroke="#c9c9c9" stroke-width="10"/></svg>
<svg style="left:1298px;top:49px" width="16" height="16" viewBox="0 0 16 16"><rect x="0.5" y="0.5" width="14" height="14" fill="#e6e6e6" stroke="#d2d2d2"/><path d="M1 1L14 14M14 1L1 14M4 1V6H1M4 6L8 8" stroke="#d2d2d2" fill="none"/></svg>
<svg style="left:1298px;top:73px" width="16" height="16" viewBox="0 0 16 16"><rect x="0.5" y="0.5" width="14" height="14" fill="#e6e6e6" stroke="#d2d2d2"/><path d="M1 1L14 14M14 1L1 14M4 1V6H1M4 6L8 8" stroke="#d2d2d2" fill="none"/><rect x="0" y="10" width="7" height="5" fill="#fcfcfb"/><path d="M1 10.5H7M1 13.5H4" stroke="#d2d2d2"/><path d="M7 14L13 7.5L15.5 10L9.5 16Z" fill="#dcdcdc" stroke="#fcfcfb" stroke-width="0.8"/></svg>
<svg style="left:1298px;top:97px" width="16" height="16" viewBox="0 0 16 16"><rect x="0.5" y="0.5" width="14" height="14" fill="#e6e6e6" stroke="#d2d2d2"/><path d="M1 1L14 14M14 1L1 14M4 1V6H1M4 6L8 8" stroke="#d2d2d2" fill="none"/><rect x="8" y="10" width="8" height="6" rx="3" fill="#fcfcfb" stroke="#d2d2d2" stroke-width="1.2"/></svg>
<svg style="left:1452px;top:44px" width="160" height="70" viewBox="0 0 1942 850"><polygon points="290,130 350,65 432,65 432,130 350,205" fill="#d9d9d9" stroke="#5a5a5a" stroke-width="6" stroke-linejoin="round" /><polygon points="88,325 160,250 235,325 150,410 88,410" fill="#d9d9d9" stroke="#5a5a5a" stroke-width="6" stroke-linejoin="round" /><line x1="350" y1="70" x2="350" y2="170" stroke="#5a5a5a" stroke-width="5" /><line x1="378" y1="70" x2="378" y2="170" stroke="#5a5a5a" stroke-width="5" /><line x1="405" y1="70" x2="405" y2="170" stroke="#5a5a5a" stroke-width="5" /><line x1="118" y1="300" x2="118" y2="405" stroke="#5a5a5a" stroke-width="5" /><line x1="148" y1="300" x2="148" y2="405" stroke="#5a5a5a" stroke-width="5" /><line x1="178" y1="300" x2="178" y2="405" stroke="#5a5a5a" stroke-width="5" /><line x1="160" y1="250" x2="290" y2="130" stroke="#5a5a5a" stroke-width="4" /><line x1="235" y1="325" x2="350" y2="205" stroke="#5a5a5a" stroke-width="4" /><line x1="150" y1="115" x2="372" y2="335" stroke="#1e8fe6" stroke-width="8" /><polygon points="130,95 190,110 145,155" fill="#1e8fe6" /><polygon points="392,355 332,340 377,295" fill="#1e8fe6" /><rect x="548" y="125" width="84" height="87" fill="#d0d0d0" stroke="#5a5a5a" stroke-width="7" /><line x1="558" y1="202" x2="622" y2="135" stroke="#999" stroke-width="5" /><line x1="558" y1="170" x2="593" y2="135" stroke="#999" stroke-width="5" /><line x1="587" y1="202" x2="622" y2="167" stroke="#999" stroke-width="5" /><rect x="548" y="258" width="84" height="87" fill="#d0d0d0" stroke="#5a5a5a" stroke-width="7" /><line x1="558" y1="335" x2="622" y2="268" stroke="#999" stroke-width="5" /><line x1="558" y1="303" x2="593" y2="268" stroke="#999" stroke-width="5" /><line x1="587" y1="335" x2="622" y2="300" stroke="#999" stroke-width="5" /><rect x="808" y="125" width="87" height="87" fill="#d0d0d0" stroke="#5a5a5a" stroke-width="7" /><line x1="818" y1="202" x2="885" y2="135" stroke="#999" stroke-width="5" /><line x1="818" y1="170" x2="853" y2="135" stroke="#999" stroke-width="5" /><line x1="850" y1="202" x2="885" y2="167" stroke="#999" stroke-width="5" /><rect x="808" y="258" width="87" height="87" fill="#d0d0d0" stroke="#5a5a5a" stroke-width="7" /><line x1="818" y1="335" x2="885" y2="268" stroke="#999" stroke-width="5" /><line x1="818" y1="303" x2="853" y2="268" stroke="#999" stroke-width="5" /><line x1="850" y1="335" x2="885" y2="300" stroke="#999" stroke-width="5" /><line x1="632" y1="125" x2="808" y2="125" stroke="#777" stroke-width="4" /><line x1="632" y1="212" x2="808" y2="212" stroke="#777" stroke-width="4" /><line x1="632" y1="258" x2="808" y2="258" stroke="#777" stroke-width="4" /><line x1="632" y1="345" x2="808" y2="345" stroke="#777" stroke-width="4" /><rect x="700" y="60" width="45" height="360" fill="#fcfcfb" /><line x1="722" y1="85" x2="722" y2="395" stroke="#1e8fe6" stroke-width="9" /><polygon points="722,45 752,98 692,98" fill="#1e8fe6" /><polygon points="722,428 752,375 692,375" fill="#1e8fe6" /><line x1="1035" y1="152" x2="1188" y2="152" stroke="#1e8fe6" stroke-width="8" /><polygon points="1018,152 1045,135 1045,169" fill="#1e8fe6" /><polygon points="1203,152 1176,135 1176,169" fill="#1e8fe6" /><rect x="1085" y="65" width="53" height="58" fill="#e4e4e4" /><path d="M1090 65 V123 M1133 65 V123 M1090 95 H1133" stroke="#666" stroke-width="7" fill="none"/><rect x="1085" y="182" width="53" height="58" fill="#e4e4e4" /><path d="M1090 182 V240 M1133 182 V240 M1090 212 H1133" stroke="#666" stroke-width="7" fill="none"/><line x1="1110" y1="372" x2="1110" y2="515" stroke="#1e8fe6" stroke-width="8" /><polygon points="1110,352 1128,382 1092,382" fill="#1e8fe6" /><polygon points="1110,535 1128,505 1092,505" fill="#1e8fe6" /><polygon points="1020,370 1080,400 1080,462 1020,432" fill="#ddd" stroke="#666" stroke-width="6" stroke-linejoin="round" /><line x1="1030" y1="425" x2="1070" y2="405" stroke="#666" stroke-width="5" /><polygon points="1140,440 1200,470 1200,532 1140,502" fill="#ddd" stroke="#666" stroke-width="6" stroke-linejoin="round" /><line x1="1150" y1="495" x2="1190" y2="475" stroke="#666" stroke-width="5" /><path d="M1060 828 V686 H1200" fill="none" stroke="#1e8fe6" stroke-width="9"/><line x1="1085" y1="790" x2="1205" y2="660" stroke="#888" stroke-width="5" stroke-dasharray="28 10"/><line x1="1030" y1="820" x2="1150" y2="700" stroke="#999" stroke-width="4" stroke-dasharray="20 14"/></svg>
<svg style="left:1606px;top:44px" width="190" height="70" viewBox="0 0 1942 715"><polygon points="200,218 242,260 200,302 158,260" fill="#cfcfcf" /><line x1="85" y1="262" x2="140" y2="262" stroke="#cfcfcf" stroke-width="6" stroke-dasharray="18 10"/><line x1="118" y1="215" x2="118" y2="240" stroke="#cfcfcf" stroke-width="6" /><line x1="185" y1="260" x2="215" y2="260" stroke="#fcfcfb" stroke-width="5" /><line x1="200" y1="245" x2="200" y2="275" stroke="#fcfcfb" stroke-width="5" /><circle cx="165" cy="440" r="19" fill="none" stroke="#cfcfcf" stroke-width="7"/><circle cx="222" cy="440" r="19" fill="none" stroke="#cfcfcf" stroke-width="7"/><circle cx="105" cy="490" r="19" fill="none" stroke="#cfcfcf" stroke-width="7"/><circle cx="105" cy="545" r="19" fill="none" stroke="#cfcfcf" stroke-width="7"/><line x1="165" y1="460" x2="165" y2="580" stroke="#cfcfcf" stroke-width="7" /><line x1="222" y1="460" x2="222" y2="580" stroke="#cfcfcf" stroke-width="7" /><line x1="125" y1="490" x2="245" y2="490" stroke="#cfcfcf" stroke-width="7" /><line x1="125" y1="545" x2="245" y2="545" stroke="#cfcfcf" stroke-width="7" /><polygon points="1170,180 1345,128 1395,150 1395,305 1215,352 1170,320" fill="#dcdcdc" stroke="#666" stroke-width="7" stroke-linejoin="round" /><line x1="1215" y1="200" x2="1215" y2="352" stroke="#666" stroke-width="6" /><line x1="1215" y1="200" x2="1395" y2="150" stroke="#666" stroke-width="6" /><line x1="1170" y1="180" x2="1215" y2="200" stroke="#666" stroke-width="6" /><polygon points="1210,105 1460,45 1460,290 1210,352" fill="rgba(80,160,228,0.5)" stroke="#1e8fe6" stroke-width="8" stroke-linejoin="round" /><line x1="1295" y1="85" x2="1295" y2="330" stroke="#1e8fe6" stroke-width="8" /><line x1="1380" y1="65" x2="1380" y2="310" stroke="#1e8fe6" stroke-width="8" /><line x1="1210" y1="188" x2="1460" y2="128" stroke="#1e8fe6" stroke-width="8" /><line x1="1210" y1="270" x2="1460" y2="210" stroke="#1e8fe6" stroke-width="8" /><g stroke="#555" stroke-width="7" fill="none"><path d="M1668 85 L1795 58 V165 L1668 205 Z"/><path d="M1710 76 V192 M1752 67 V178 M1668 125 L1795 93 M1668 165 L1795 128"/></g><circle cx="1793" cy="148" r="37" fill="#f5b13b"/><polygon points="1778,195 1808,195 1793,212" fill="#555" /><g stroke="#cfcfcf" stroke-width="7" fill="none"><path d="M1715 325 H1810 L1770 415 H1680 Z"/><path d="M1730 300 L1700 345 M1825 300 L1795 345 M1700 395 L1670 440"/></g><g transform="rotate(-45 1790 420)"><rect x="1745" y="402" width="85" height="34" fill="#dedede" stroke="#fcfcfb" stroke-width="4"/></g><rect x="1672" y="548" width="153" height="152" fill="#fcfcfb" stroke="#5a5a5a" stroke-width="8" /><rect x="1672" y="545" width="153" height="21" fill="#555" /><polygon points="1712,612 1735,595 1788,595 1788,655 1765,672 1712,672" fill="#49b35c" stroke="#2f9446" stroke-width="4" stroke-linejoin="round" /></svg>
<svg style="left:755px;top:400px" width="705" height="365" viewBox="755 400 705 365"><defs>
<linearGradient id="ceil" x1="0" y1="0" x2="0" y2="1"><stop offset="0" stop-color="#fdfdfb"/><stop offset="0.16" stop-color="#fdfdfa"/><stop offset="0.19" stop-color="#f8f8ec"/><stop offset="0.7" stop-color="#f7f7ea"/><stop offset="0.86" stop-color="#efefe4"/><stop offset="1" stop-color="#dcdcd4"/></linearGradient>
<linearGradient id="rwall" gradientUnits="userSpaceOnUse" x1="1245" y1="610" x2="1440" y2="470"><stop offset="0" stop-color="#8f8f8f"/><stop offset="0.3" stop-color="#a5a5a5"/><stop offset="0.55" stop-color="#bebebe"/><stop offset="0.8" stop-color="#d3d3d3"/><stop offset="1" stop-color="#c6c6c6"/></linearGradient>
<linearGradient id="soffit" gradientUnits="userSpaceOnUse" x1="761" y1="410" x2="1050" y2="497"><stop offset="0" stop-color="#d6d6d6"/><stop offset="0.5" stop-color="#c6c6c6"/><stop offset="1" stop-color="#bdbdbd"/></linearGradient>
<linearGradient id="terr" gradientUnits="userSpaceOnUse" x1="761" y1="740" x2="1040" y2="560"><stop offset="0" stop-color="#787b94"/><stop offset="1" stop-color="#676a84"/></linearGradient>
<filter id="bl6" x="-20%" y="-20%" width="140%" height="140%"><feGaussianBlur stdDeviation="7"/></filter><filter id="bl2" x="-10%" y="-10%" width="120%" height="120%"><feGaussianBlur stdDeviation="1.6"/></filter><clipPath id="rw"><polygon points="1235.5,494.3 1452,452.3 1452,651 1235.5,564.3"/></clipPath><clipPath id="frame"><rect x="761.5" y="406.5" width="690" height="351"/></clipPath>
</defs><g clip-path="url(#frame)"><rect x="761" y="406" width="691" height="352" fill="#7b7b7b"/><g filter="url(#bl2)"><polygon points="1047,564 1050,590 1054,621 1072,660 1098,688 1137,697 1169.5,711 1190,725 1215.8,748 1225,758 1452,758 1452,651 1235,564" fill="#6a6a6a" /><polygon points="1110,565 1235,564 1452,651 1452,674 1405,656 1373,633 1376,665 1341,683 1329,711 1294,721 1268,716 1262,695 1200,690 1150,672 1125,662 1112,692 1098,690 1084,655 1084,600 1098,575" fill="#5d5d5d" /><polygon points="1195,690 1262,690 1285,722 1270,752 1210,750" fill="#626262" /></g><polygon points="810,406 1452,406 1452,452.5 1235.5,494.3 1050.3,494.3" fill="url(#ceil)" /><polygon points="1050.3,494.3 1235.5,494.3 1452,452.5 1452,432 1235,476 1010,476" fill="rgba(205,205,200,0.28)" /><polygon points="1050.3,494.3 1235.5,494.3 1452,452.5 1452,444 1235,487 1032,487" fill="rgba(185,185,178,0.3)" /><polygon points="761,406 810,406 1050.3,494.3 1049.3,500.5 761,423.7" fill="url(#soffit)" /><line x1="810" y1="406.5" x2="1050.3" y2="494.3" stroke="#111" stroke-width="1.2" /><polygon points="761,423.7 1049.3,500.5 1046.5,503 988.8,492.7 761,448.3" fill="#a2a2a2" /><polygon points="761,439.5 1000,495.5 988.8,492.7 761,448.3" fill="#b2b2b2" /><line x1="761" y1="423.7" x2="1049.3" y2="500.3" stroke="#222" stroke-width="1" /><line x1="761" y1="435" x2="1020" y2="497.5" stroke="#222" stroke-width="1.2" /><line x1="761" y1="438.3" x2="1010" y2="496.5" stroke="#333" stroke-width="0.8" /><polygon points="761,448 988.8,492.7 1046.5,503 1046.5,566 1021,580 761,751.4" fill="#cfd1e6" /><polygon points="761,596.8 970.8,549.5 1046.5,549.5 1046.5,552 761,620" fill="#5f7255" /><polygon points="761,620 1046.5,551.5 1046.5,566 1021,580 761,751.4" fill="url(#terr)" /><line x1="761" y1="596.8" x2="971.5" y2="549.3" stroke="#353a55" stroke-width="0.8" /><line x1="761" y1="619.6" x2="1046" y2="551.3" stroke="#353a55" stroke-width="0.8" /><line x1="914" y1="563.6" x2="921" y2="561.8" stroke="#333850" stroke-width="1.6" /><polygon points="761,596.8 827,581.5 827,559 761,566" fill="#d9daeb" /><line x1="761" y1="577.4" x2="827" y2="567" stroke="#25283f" stroke-width="1.9" /><line x1="761" y1="583.5" x2="827" y2="572.2" stroke="#25283f" stroke-width="1.9" /><line x1="761" y1="589.7" x2="827" y2="577.2" stroke="#25283f" stroke-width="1.9" /><line x1="761" y1="595.8" x2="827" y2="582.1" stroke="#25283f" stroke-width="1.9" /><line x1="761" y1="602" x2="827" y2="587" stroke="#25283f" stroke-width="1.9" /><line x1="761" y1="608.1" x2="827" y2="591.9" stroke="#25283f" stroke-width="1.9" /><rect x="814.3" y="558" width="5.900000000000091" height="45.89999999999998" fill="#6f728a" stroke="#25283f" stroke-width="0.9"/><line x1="817.2" y1="558" x2="817.2" y2="603.9" stroke="#3a3d55" stroke-width="0.7" /><polygon points="761,562.2 826.5,555 827.2,558 761,566" fill="#a3958b" stroke="#4a4248" stroke-width="0.6" stroke-linejoin="round" /><rect x="1021" y="536" width="16" height="22" fill="#b6b8d0"/><line x1="1021" y1="539.5" x2="1037" y2="539.5" stroke="#2a2d45" stroke-width="1.5" /><line x1="1021" y1="542.9" x2="1037" y2="542.9" stroke="#2a2d45" stroke-width="1.5" /><line x1="1021" y1="546.3" x2="1037" y2="546.3" stroke="#2a2d45" stroke-width="1.5" /><line x1="1021" y1="549.7" x2="1037" y2="549.7" stroke="#2a2d45" stroke-width="1.5" /><line x1="1021" y1="553.1" x2="1037" y2="553.1" stroke="#2a2d45" stroke-width="1.5" /><line x1="1021" y1="556.5" x2="1037" y2="556.5" stroke="#2a2d45" stroke-width="1.5" /><line x1="1019" y1="535.5" x2="1038" y2="535.5" stroke="#6a5e62" stroke-width="1.8" /><rect x="1021" y="536" width="2" height="22" fill="#33364e"/><rect x="1033.5" y="536" width="1.5" height="22" fill="#33364e"/><polygon points="761,448.3 988.8,492.7 1046.5,503 1046.5,509.5 1037,508.8 986.9,502.2 761,475.7" fill="#22254a" /><line x1="761" y1="452.90000000000003" x2="990" y2="494.3" stroke="#4a4f80" stroke-width="0.6" /><line x1="761" y1="457.5" x2="990" y2="495.9" stroke="#4a4f80" stroke-width="0.6" /><line x1="761" y1="462.1" x2="990" y2="497.5" stroke="#4a4f80" stroke-width="0.6" /><line x1="761" y1="466.7" x2="990" y2="499.09999999999997" stroke="#4a4f80" stroke-width="0.6" /><line x1="761" y1="471.3" x2="990" y2="500.7" stroke="#4a4f80" stroke-width="0.6" /><line x1="761" y1="448.3" x2="988.8" y2="492.7" stroke="#5a66b8" stroke-width="1" /><rect x="1037" y="508.5" width="6.7000000000000455" height="57.5" fill="#9a9cb8"/><polygon points="1043.7,503 1053,503 1053,564.5 1043.7,567" fill="#16161c" /><rect x="1048" y="512" width="1.5" height="48" fill="#555"/><polygon points="986.3,490.9 997.3,492.8 998,602.7 989.7,602.7" fill="#2b2c35" /><polygon points="988.6,491.4 991,491.8 993.2,602.7 991.6,602.7" fill="#8d8d8d" /><polygon points="992.8,492 995.8,492.5 996.7,602.7 994.8,602.7" fill="#a9a9a9" /><polygon points="761,751.4 1021,580 1046.5,566 1050,564.5 1050,566 1027.7,580.5 789.3,758 761,758" fill="#121212" /><polygon points="781.9,758 886.6,680 1024,582 1027.7,580.5 789.3,758" fill="#4c4c4c" /><polygon points="761,754.3 1010,590.5 1013.5,591 771.7,758 761,758" fill="#9c9c9c" /><line x1="761" y1="737" x2="1015" y2="581.5" stroke="#4a5180" stroke-width="2.2" /><line x1="761" y1="737.3" x2="1015" y2="581.8" stroke="#8c9cd0" stroke-width="0.8" /><line x1="761" y1="750.4" x2="1021" y2="579.2" stroke="#3d4474" stroke-width="1.4" /><rect x="1050" y="494.3" width="185.5" height="69.99999999999994" fill="#adadad"/><rect x="1050" y="494.3" width="185.5" height="6.699999999999989" fill="#b0b0b0"/><line x1="1050.3" y1="494.3" x2="1235.5" y2="494.3" stroke="#222" stroke-width="1" /><rect x="1051.6" y="501.4" width="79.70000000000005" height="60.89999999999998" fill="#17171d"/><rect x="1053" y="505" width="76.5" height="5.5" fill="#23264a"/><rect x="1056.4" y="510.3" width="72.19999999999982" height="40.30000000000001" fill="#cfd1e6"/><rect x="1056.4" y="510.3" width="4.099999999999909" height="49.19999999999999" fill="#9b9dba"/><rect x="1060.5" y="550.6" width="68.09999999999991" height="8.899999999999977" fill="#4f5f50"/><rect x="1056.4" y="559" width="72.19999999999982" height="1.5" fill="#33364f"/><rect x="1090" y="503" width="2.7999999999999545" height="59" fill="#17171d"/><rect x="1051" y="500.5" width="81" height="2.0" fill="#333"/><rect x="1131.3" y="503" width="13.299999999999955" height="61" fill="#a9a9a9"/><rect x="1144.6" y="501.4" width="84.40000000000009" height="60.89999999999998" fill="#17171d"/><rect x="1144" y="500.5" width="87.5" height="2.3000000000000114" fill="#333"/><rect x="1146.5" y="505" width="79.5" height="5.5" fill="#23264a"/><rect x="1147.3" y="510.3" width="65.70000000000005" height="40.30000000000001" fill="#cfd1e6"/><rect x="1202" y="517" width="11" height="33.60000000000002" fill="#8d8fac"/><rect x="1147.3" y="550.6" width="65.70000000000005" height="8.899999999999977" fill="#4f5f50"/><polygon points="1202,549 1213,553 1213,559.5 1196,559.5" fill="#7a7d95" /><rect x="1213" y="510.3" width="13" height="49.69999999999999" fill="#5b5d78"/><rect x="1147.3" y="559" width="78.70000000000005" height="1.5" fill="#33364f"/><rect x="1184" y="503" width="3.5" height="59" fill="#17171d"/><rect x="1226" y="505" width="2.5" height="57" fill="#2a2a35"/><rect x="1229" y="503" width="2" height="59" fill="#c4c4c4"/><rect x="1071.2" y="532.3" width="5.599999999999909" height="1.400000000000091" fill="#3a3d55"/><rect x="1107.2" y="532.3" width="5.599999999999909" height="1.400000000000091" fill="#3a3d55"/><rect x="1161.7" y="532.3" width="5.599999999999909" height="1.400000000000091" fill="#3a3d55"/><line x1="1050" y1="564.3" x2="1235.5" y2="564.3" stroke="#222" stroke-width="1" /><polygon points="1235.5,494.3 1452,452.3 1452,651 1235.5,564.3" fill="url(#rwall)" /><g clip-path="url(#rw)"><g filter="url(#bl6)"><polygon points="1235.5,494.3 1300,481.8 1290,520 1262,560 1250,570 1235.5,564.3" fill="rgba(140,140,140,0.4)" /><polygon points="1320,498 1452,466 1452,565 1405,550 1345,535" fill="rgba(232,232,232,0.55)" /><polygon points="1340,560 1400,570 1452,590 1452,651 1235.5,564.3 1270,560" fill="rgba(130,130,130,0.32)" /><polygon points="1235.5,564.3 1452,651 1452,632 1300,572 1260,560" fill="rgba(190,190,190,0.35)" /></g></g><line x1="1235.5" y1="494.3" x2="1452" y2="452.3" stroke="#222" stroke-width="1" /><line x1="1235.5" y1="494.3" x2="1235.5" y2="564.3" stroke="#333" stroke-width="1" /><line x1="1235.5" y1="564.3" x2="1452" y2="651" stroke="#222" stroke-width="1" /><rect x="1141.4" y="551.3" width="21.59999999999991" height="13.700000000000045" fill="#a8713f" stroke="#2e1c0c" stroke-width="0.8"/><line x1="1143" y1="555.5" x2="1161.5" y2="555.5" stroke="#2e1c0c" stroke-width="0.8" /><line x1="1143" y1="559.5" x2="1161.5" y2="559.5" stroke="#2e1c0c" stroke-width="0.8" /><polygon points="1086.6,578.7 1093.9,562 1097.6,562 1101,590 1098,620 1090,618" fill="#101010" /><polygon points="1086.6,578.7 1093.9,562 1095.5,562 1089.5,580 1092.5,618 1088,651.6 1086,651" fill="#a8713f" stroke="#2e1c0c" stroke-width="0.7" stroke-linejoin="round" /><polygon points="1095,588 1105,586 1104,620 1094,620" fill="#ece8e2" /><polygon points="1095.5,562 1097.8,562 1100,580 1098,582" fill="#a8713f" stroke="#2e1c0c" stroke-width="0.6" stroke-linejoin="round" /><polygon points="1232.4,562 1290.9,582 1287.6,603 1230,574.3" fill="#a8713f" stroke="#2e1c0c" stroke-width="0.8" stroke-linejoin="round" /><polygon points="1279,578.5 1290.9,582 1286,612 1275.5,607" fill="#b98452" stroke="#2e1c0c" stroke-width="0.8" stroke-linejoin="round" /><line x1="1234" y1="568.0" x2="1278" y2="583.5" stroke="#1d1208" stroke-width="1.5" /><line x1="1234" y1="571.2" x2="1278" y2="587.1" stroke="#1d1208" stroke-width="1.5" /><line x1="1234" y1="574.4" x2="1278" y2="590.7" stroke="#1d1208" stroke-width="1.5" /><rect x="1123.7" y="620" width="4.2000000000000455" height="33.39999999999998" fill="#a8713f" stroke="#2e1c0c" stroke-width="0.7"/><rect x="1160.6" y="622" width="3.900000000000091" height="24" fill="#a8713f" stroke="#2e1c0c" stroke-width="0.7"/><polygon points="1277.6,626 1285,626 1288.7,659.3 1284,659.3" fill="#a8713f" stroke="#2e1c0c" stroke-width="0.7" stroke-linejoin="round" /><polygon points="1283,626 1286.5,626 1289.5,655 1288.5,659" fill="#8e5b30" stroke="#2e1c0c" stroke-width="0.6" stroke-linejoin="round" /><polygon points="1166,623 1197,624.3 1190.6,673" fill="#dcdcda" stroke="#333" stroke-width="0.7" stroke-linejoin="round" /><polygon points="1108.7,564.4 1209.2,566.6 1302,612.2 1105.3,607.2" fill="#e9e9e9" stroke="#222" stroke-width="0.9" stroke-linejoin="round" /><polygon points="1103,566 1108.7,564.4 1105.3,607.2 1100,608" fill="#a8713f" stroke="#2e1c0c" stroke-width="0.7" stroke-linejoin="round" /><line x1="1108.7" y1="564.6" x2="1209.2" y2="566.6" stroke="#2e1c0c" stroke-width="1.6" /><line x1="1209.2" y1="566.6" x2="1305" y2="613" stroke="#2e1c0c" stroke-width="1.8" /><polygon points="1099.8,607.9 1314,614 1314,690 1309,697 1294.2,691 1294.2,626 1109.8,620.3 1109.8,687 1099.8,687" fill="#a8713f" stroke="#2e1c0c" stroke-width="0.9" stroke-linejoin="round" /><polygon points="1294.2,626 1297.5,626.2 1297.5,692 1294.2,691" fill="#9a6537" /><polygon points="1309,616 1314,616 1314,690 1309,697" fill="#b27c4a" /><line x1="1100" y1="608" x2="1314" y2="614.2" stroke="#2e1c0c" stroke-width="1" /><polygon points="1201.4,664.9 1244.5,667 1250,681.4 1201.4,679.2" fill="#ebe7e0" stroke="#333" stroke-width="0.7" stroke-linejoin="round" /><polygon points="1199,679.2 1250,681.4 1250.5,688 1199,686" fill="#a8713f" stroke="#2e1c0c" stroke-width="0.7" stroke-linejoin="round" /><polygon points="1198,618.5 1267.7,621.8 1262,634 1204,631.5" fill="#a8713f" stroke="#2e1c0c" stroke-width="0.8" stroke-linejoin="round" /><polygon points="1204,631.5 1262,634 1249.5,664 1203,661.5" fill="#241408" /><polygon points="1204,633.5 1258,636 1255.5,641 1204,638.6" fill="#a8713f" /><polygon points="1204,640.7 1258,643 1255.5,648 1204,645.8000000000001" fill="#a8713f" /><polygon points="1204,647.9 1258,650 1255.5,655 1204,653.0" fill="#a8713f" /><polygon points="1204,655.1 1258,657 1255.5,662 1204,660.2" fill="#a8713f" /><polygon points="1198,618.5 1205,619 1197.5,673.7 1205.5,745 1199.5,745.8 1190.4,673.7" fill="#a8713f" stroke="#2e1c0c" stroke-width="0.8" stroke-linejoin="round" /><polygon points="1258,621.5 1267.7,621.8 1256,682.5 1268.5,750 1262,751 1247.5,682.5" fill="#a8713f" stroke="#2e1c0c" stroke-width="0.8" stroke-linejoin="round" /><polygon points="1264,621.6 1267.7,621.8 1256,682.5 1268.5,750 1266,750.5 1253,682.5" fill="#b98452" /><polygon points="1193,686 1199,686 1205.5,745 1199.5,745.8" fill="#8e5b30" /></g><rect x="761.5" y="406.5" width="690" height="351" fill="none" stroke="#111" stroke-width="1"/></svg>
<svg style="left:1700px;top:235px" width="170" height="95" viewBox="1700 235 170 95"><ellipse cx="1785.5" cy="307" rx="69" ry="4.8" fill="none" stroke="#d0d0d0" stroke-width="1" stroke-dasharray="1.5 4"/><ellipse cx="1785.5" cy="307.5" rx="60" ry="3.2" fill="none" stroke="#dadada" stroke-width="0.8" stroke-dasharray="2 5"/><path d="M1751 309 L1758 303.5 H1810 L1818 309 Z" fill="#e2e2e2"/><rect x="1769" y="305" width="32" height="3" fill="#cfcfcf"/><rect x="1758.5" y="252.5" width="51.5" height="51.3" fill="#e8e8e8" stroke="#a9a9a9" stroke-width="1"/><rect x="1759" y="253" width="50.5" height="3.5" fill="#fafafa"/><rect x="1759" y="288" width="50.5" height="15.3" fill="#d9d9d9"/><rect x="1768" y="269" width="32" height="19" fill="#d5e4f3"/><text x="1762" y="284" font-family="Liberation Sans, sans-serif" font-weight="700" font-size="14.6" fill="#8688a2" textLength="45.4" lengthAdjust="spacingAndGlyphs">ARRIÈRE</text></svg>
<svg style="left:1836px;top:356px" width="42" height="152" viewBox="1836 356 42 152"><rect x="1840.3" y="360.3" width="33.4" height="143.4" rx="5" fill="#fdfdfc" stroke="#a9a9a9" stroke-width="1.7"/><rect x="1843.4" y="377.7" width="27.3" height="37.8" fill="#d5e6f3"/><circle cx="1866.8" cy="366.1" r="3.6" fill="#f4f4f4" stroke="#9a9a9a" stroke-width="1.1"/><path d="M1865.0 364.3L1868.6 367.90000000000003M1868.6 364.3L1865.0 367.90000000000003" stroke="#9a9a9a" stroke-width="1.1"/><circle cx="1856.5" cy="391.1" r="10.3" fill="#eef0f6" stroke="#8a8ca3" stroke-width="1.1"/><path d="M1846.2 391.1 A10.3 10.3 0 0 1 1856.5 380.8 H1865.3 Q1866.8 380.8 1866.8 382.3 V391.1" fill="#e6e8f2" stroke="#8a8ca3" stroke-width="1.1"/><circle cx="1856.5" cy="391.1" r="5.665000000000001" fill="#f8f8fb" stroke="#8a8ca3" stroke-width="1.1"/><path d="M1852.38 395.22 L1849.084 398.516 M1860.62 395.22 L1863.916 398.516" stroke="#8a8ca3" stroke-width="1"/><path d="M1854.0 409.5H1859.0L1856.5 412.5Z" fill="#8a8a8a"/><path d="M1844 417.3H1870" stroke="#bdbdbd" stroke-width="1"/><path d="M1849 427.7H1856.4" stroke="#8a8ca3" stroke-width="1.4"/><circle cx="1858.6" cy="435" r="3.2" fill="#f4f6fa" stroke="#9a9aa8" stroke-width="1.1"/><path d="M1861 437.5L1864 440.5" stroke="#9a9aa8" stroke-width="1.6"/><path d="M1854.0 451.7H1859.0L1856.5 454.7Z" fill="#8a8a8a"/><path d="M1843.5 471.5L1869.5 459.3L1864.5 481.5L1859.5 483.8L1855 477.5L1852.5 482.5L1850.5 475.5Z" fill="#f4f5f9" stroke="#9a9caf" stroke-width="1.2" stroke-linejoin="round"/><path d="M1869.5 459.3L1851 475.5" stroke="#9a9caf" stroke-width="1"/><circle cx="1866.8" cy="496.9" r="3.6" fill="#f4f4f4" stroke="#9a9a9a" stroke-width="1.1"/><path d="M1864.6 496.9H1869.0" stroke="#9a9a9a" stroke-width="1.3"/></svg>
<svg style="left:1902px;top:154px" width="40" height="124" viewBox="1902 154 40 124"><rect x="1906.4" y="157.6" width="33.4" height="115.6" rx="5" fill="#e9e9e9" stroke="#a3a3a3" stroke-width="1.7"/><circle cx="1933.2" cy="162.7" r="3.6" fill="#f4f4f4" stroke="#9a9a9a" stroke-width="1.1"/><path d="M1931.4 160.89999999999998L1935.0 164.5M1935.0 160.89999999999998L1931.4 164.5" stroke="#9a9a9a" stroke-width="1.1"/><circle cx="1919.5" cy="187.2" r="9" fill="#eef0f6" stroke="#8a8ca3" stroke-width="1.1"/><path d="M1910.5 187.2 A9 9 0 0 1 1919.5 178.2 H1927.0 Q1928.5 178.2 1928.5 179.7 V187.2" fill="#e6e8f2" stroke="#8a8ca3" stroke-width="1.1"/><circle cx="1919.5" cy="187.2" r="4.95" fill="#f8f8fb" stroke="#8a8ca3" stroke-width="1.1"/><path d="M1915.9 190.79999999999998 L1913.02 193.67999999999998 M1923.1 190.79999999999998 L1925.98 193.67999999999998" stroke="#8a8ca3" stroke-width="1"/><text x="1922.5" y="201" font-family="Liberation Sans, sans-serif" font-size="9.5" font-weight="700" fill="#5a6fae" textLength="12.5" lengthAdjust="spacingAndGlyphs">2D</text><path d="M1920.1 206.9H1925.1L1922.6 209.9Z" fill="#8a8a8a"/><path d="M1910 214.7H1936" stroke="#bdbdbd" stroke-width="1"/><rect x="1915" y="223.8" width="10.8" height="10" fill="#b4ccb0" stroke="#88a784" stroke-width="1"/><circle cx="1927" cy="232.5" r="3" fill="#f2f2f2" stroke="#8a8a8a" stroke-width="1.1"/><path d="M1929.2 234.8L1931.8 237.6" stroke="#8a8a8a" stroke-width="1.6"/><path d="M1920.1 249.0H1925.1L1922.6 252.0Z" fill="#8a8a8a"/><circle cx="1933.2" cy="266.3" r="3.6" fill="#f4f4f4" stroke="#9a9a9a" stroke-width="1.1"/><path d="M1931.0 266.3H1935.4" stroke="#9a9a9a" stroke-width="1.3"/></svg>
<svg style="left:1320px;top:320px" width="175" height="175" viewBox="1320 320 175 175"><defs>
<linearGradient id="wg" gradientUnits="userSpaceOnUse" x1="1345" y1="350" x2="1440" y2="440"><stop offset="0" stop-color="#bfbfbf" stop-opacity="0.64"/><stop offset="0.5" stop-color="#cacaca" stop-opacity="0.6"/><stop offset="1" stop-color="#c6c6c6" stop-opacity="0.58"/></linearGradient>
<linearGradient id="glare" gradientUnits="userSpaceOnUse" x1="1440" y1="345" x2="1380" y2="415"><stop offset="0" stop-color="#fff" stop-opacity="0.85"/><stop offset="1" stop-color="#fff" stop-opacity="0"/></linearGradient>
<clipPath id="wc"><circle cx="1392.8" cy="394.9" r="63.6"/></clipPath>
</defs><path d="M1410 334.5 H1448 Q1453.6 334.5 1453.6 340 V452.6 H1420" fill="rgba(240,242,236,0.6)" stroke="#9a9a9a" stroke-width="1.2"/><circle cx="1392.8" cy="394.9" r="63.6" fill="url(#wg)" stroke="#8c8c8c" stroke-width="1.3"/><path d="M1420.0 367.7L1437.8 349.9A63.6 63.6 0 0 1 1437.8 439.9L1420.0 422.1A38.4 38.4 0 0 0 1420.0 367.7Z" fill="rgba(246,246,246,0.75)"/><path d="M1420.0 422.1L1437.8 439.9A63.6 63.6 0 0 1 1347.8 439.9L1365.6 422.1A38.4 38.4 0 0 0 1420.0 422.1Z" fill="rgba(240,240,236,0.55)"/><g clip-path="url(#wc)"><path d="M1462 330 L1440 318 L1368 418 L1388 424 Z" fill="url(#glare)"/></g><circle cx="1392.8" cy="394.9" r="38.4" fill="rgba(255,255,255,0.36)" stroke="#7c7c7c" stroke-width="1.2"/><path d="M1392.8 356.5V433.29999999999995M1354.3999999999999 394.9H1431.2" stroke="#7c7c7c" stroke-width="1.1"/><path d="M1420.0 422.1L1437.8 439.9" stroke="#8a8a8a" stroke-width="1.1"/><path d="M1365.6 422.1L1347.8 439.9" stroke="#8a8a8a" stroke-width="1.1"/><path d="M1365.6 367.7L1347.8 349.9" stroke="#8a8a8a" stroke-width="1.1"/><path d="M1420.0 367.7L1437.8 349.9" stroke="#8a8a8a" stroke-width="1.1"/><text x="1377.2" y="349.2" font-size="10.2" font-family="Liberation Sans, sans-serif" font-weight="700" fill="#474747" textLength="31.8" lengthAdjust="spacingAndGlyphs">ZOOM</text><text x="1383.3" y="448.9" font-size="10.2" font-family="Liberation Sans, sans-serif" font-weight="700" fill="#474747" textLength="19.1" lengthAdjust="spacingAndGlyphs">PAN</text><text transform="translate(1348,411.7) rotate(-90)" font-size="10.2" font-family="Liberation Sans, sans-serif" font-weight="700" fill="#474747" textLength="35" lengthAdjust="spacingAndGlyphs">ORBITE</text><text transform="translate(1438.2,363.5) rotate(90)" font-size="10.2" font-family="Liberation Sans, sans-serif" font-weight="700" fill="#474747" textLength="64.7" lengthAdjust="spacingAndGlyphs">REMBOBINER</text><text transform="translate(1369.90,385.91) rotate(291.4)" text-anchor="middle" font-size="8.3" font-family="Liberation Sans, sans-serif" font-weight="700" fill="#474747">C</text><text transform="translate(1371.92,381.89) rotate(301.9)" text-anchor="middle" font-size="8.3" font-family="Liberation Sans, sans-serif" font-weight="700" fill="#474747">E</text><text transform="translate(1374.63,378.31) rotate(312.4)" text-anchor="middle" font-size="8.3" font-family="Liberation Sans, sans-serif" font-weight="700" fill="#474747">N</text><text transform="translate(1377.81,375.40) rotate(322.4)" text-anchor="middle" font-size="8.3" font-family="Liberation Sans, sans-serif" font-weight="700" fill="#474747">T</text><text transform="translate(1381.44,373.08) rotate(332.5)" text-anchor="middle" font-size="8.3" font-family="Liberation Sans, sans-serif" font-weight="700" fill="#474747">R</text><text transform="translate(1385.60,371.38) rotate(343.0)" text-anchor="middle" font-size="8.3" font-family="Liberation Sans, sans-serif" font-weight="700" fill="#474747">E</text><text transform="translate(1402.92,372.48) rotate(384.3)" text-anchor="middle" font-size="8.3" font-family="Liberation Sans, sans-serif" font-weight="700" fill="#474747">N</text><text transform="translate(1407.56,375.22) rotate(396.9)" text-anchor="middle" font-size="8.3" font-family="Liberation Sans, sans-serif" font-weight="700" fill="#474747">A</text><text transform="translate(1411.36,378.75) rotate(409.0)" text-anchor="middle" font-size="8.3" font-family="Liberation Sans, sans-serif" font-weight="700" fill="#474747">V</text><text transform="translate(1413.48,381.57) rotate(417.2)" text-anchor="middle" font-size="8.3" font-family="Liberation Sans, sans-serif" font-weight="700" fill="#474747">I</text><text transform="translate(1415.34,385.05) rotate(426.4)" text-anchor="middle" font-size="8.3" font-family="Liberation Sans, sans-serif" font-weight="700" fill="#474747">G</text><text transform="translate(1416.63,388.77) rotate(435.6)" text-anchor="middle" font-size="8.3" font-family="Liberation Sans, sans-serif" font-weight="700" fill="#474747">.</text><text transform="translate(1361.48,401.44) rotate(78.2)" text-anchor="middle" font-size="8.3" font-family="Liberation Sans, sans-serif" font-weight="700" fill="#474747">R</text><text transform="translate(1362.93,406.38) rotate(69.0)" text-anchor="middle" font-size="8.3" font-family="Liberation Sans, sans-serif" font-weight="700" fill="#474747">E</text><text transform="translate(1365.26,411.20) rotate(59.4)" text-anchor="middle" font-size="8.3" font-family="Liberation Sans, sans-serif" font-weight="700" fill="#474747">G</text><text transform="translate(1368.49,415.71) rotate(49.4)" text-anchor="middle" font-size="8.3" font-family="Liberation Sans, sans-serif" font-weight="700" fill="#474747">A</text><text transform="translate(1372.30,419.47) rotate(39.8)" text-anchor="middle" font-size="8.3" font-family="Liberation Sans, sans-serif" font-weight="700" fill="#474747">R</text><text transform="translate(1376.68,422.54) rotate(30.2)" text-anchor="middle" font-size="8.3" font-family="Liberation Sans, sans-serif" font-weight="700" fill="#474747">D</text><text transform="translate(1381.32,424.77) rotate(21.0)" text-anchor="middle" font-size="8.3" font-family="Liberation Sans, sans-serif" font-weight="700" fill="#474747">E</text><text transform="translate(1386.26,426.22) rotate(11.8)" text-anchor="middle" font-size="8.3" font-family="Liberation Sans, sans-serif" font-weight="700" fill="#474747">R</text><text transform="translate(1399.15,426.26) rotate(-11.5)" text-anchor="middle" font-size="8.3" font-family="Liberation Sans, sans-serif" font-weight="700" fill="#474747">H</text><text transform="translate(1404.97,424.50) rotate(-22.4)" text-anchor="middle" font-size="8.3" font-family="Liberation Sans, sans-serif" font-weight="700" fill="#474747">A</text><text transform="translate(1410.35,421.66) rotate(-33.3)" text-anchor="middle" font-size="8.3" font-family="Liberation Sans, sans-serif" font-weight="700" fill="#474747">U</text><text transform="translate(1414.75,418.18) rotate(-43.3)" text-anchor="middle" font-size="8.3" font-family="Liberation Sans, sans-serif" font-weight="700" fill="#474747">T</text><text transform="translate(1417.32,415.46) rotate(-50.0)" text-anchor="middle" font-size="8.3" font-family="Liberation Sans, sans-serif" font-weight="700" fill="#474747">/</text><text transform="translate(1419.81,412.06) rotate(-57.6)" text-anchor="middle" font-size="8.3" font-family="Liberation Sans, sans-serif" font-weight="700" fill="#474747">B</text><text transform="translate(1422.57,406.64) rotate(-68.5)" text-anchor="middle" font-size="8.3" font-family="Liberation Sans, sans-serif" font-weight="700" fill="#474747">A</text><text transform="translate(1424.21,401.03) rotate(-79.0)" text-anchor="middle" font-size="8.3" font-family="Liberation Sans, sans-serif" font-weight="700" fill="#474747">S</text><path d="M1441.2 341L1446.8 346.6M1446.8 341L1441.2 346.6" stroke="#666" stroke-width="1.1"/><circle cx="1444.2" cy="445" r="4.3" fill="#9cbf9c" stroke="#8d9a8d" stroke-width="1"/><circle cx="1444.2" cy="444.1" r="37.8" fill="none" stroke="#9c9c9c" stroke-width="3.2"/><circle cx="1444.2" cy="444.1" r="36" fill="none" stroke="#f4f4f4" stroke-width="1"/><path d="M1444 445 V462.2 L1447.9 458.5 L1450.9 465.2 L1453.5 464 L1450.6 457.4 L1456 457.4 Z" fill="#fff" stroke="#222" stroke-width="1" stroke-linejoin="miter"/></svg>
<svg style="left:306.7px;top:169.5px" width="11.0" height="11.0"><path d="M1 1L10.0 10.0M10.0 1L1 10.0" stroke="#6a6a6a" stroke-width="1.3"/></svg>
<svg style="left:306.7px;top:577.5px" width="11.0" height="11.0"><path d="M1 1L10.0 10.0M10.0 1L1 10.0" stroke="#6a6a6a" stroke-width="1.3"/></svg>
<svg style="left:480.8px;top:171.3px" width="10.4" height="10.4"><path d="M1 1L9.4 9.4M9.4 1L1 9.4" stroke="#6a6a6a" stroke-width="1.3"/></svg>
<svg style="left:304.5px;top:291.0px" width="10" height="6"><path d="M1 5L5.0 1L9 5" stroke="#8c8c8c" stroke-width="1.8" fill="none"/></svg>
<svg style="left:304.5px;top:536.0px" width="10" height="6"><path d="M1 1L5.0 5L9 1" stroke="#8c8c8c" stroke-width="1.8" fill="none"/></svg>
<svg style="left:304.5px;top:637.0px" width="10" height="6"><path d="M1 5L5.0 1L9 5" stroke="#8c8c8c" stroke-width="1.8" fill="none"/></svg>
<svg style="left:1878.5px;top:193.0px" width="10" height="6"><path d="M1 5L5.0 1L9 5" stroke="#8c8c8c" stroke-width="1.8" fill="none"/></svg>
<svg style="left:1878.5px;top:944.0px" width="10" height="6"><path d="M1 1L5.0 5L9 1" stroke="#8c8c8c" stroke-width="1.8" fill="none"/></svg>
<svg style="left:287.4px;top:289.5px" width="8" height="10"><path d="M1 4.2L4 1.2L7 4.2M1 8.8L4 5.8L7 8.8" stroke="#222" stroke-width="1.3" fill="none"/></svg>
<svg style="left:287.4px;top:487.5px" width="8" height="10"><path d="M1 4.2L4 1.2L7 4.2M1 8.8L4 5.8L7 8.8" stroke="#222" stroke-width="1.3" fill="none"/></svg>
<svg style="left:188px;top:265px" width="9" height="6"><path d="M1 1L4.5 4.5L8 1" stroke="#8a8a8a" stroke-width="1.4" fill="none"/></svg>
<svg style="left:1878px;top:172px" width="12" height="9"><path d="M1 1.5H11" stroke="#777" stroke-width="1.2"/><path d="M2 4.5H10L6 8.5Z" fill="#777"/></svg>
<svg style="left:326px;top:167px" width="17" height="17" viewBox="0 0 17 17"><path d="M2.5 8.5L8.5 2.5L14 8.5V15.5H2.5Z" fill="#f6f6f6" stroke="#666" stroke-width="1.2" stroke-linejoin="round"/><path d="M8.5 2.5L10.5 1.5L16 7.5L14 8.5Z" fill="#9a9a9a" stroke="#666" stroke-width="1"/><path d="M14 8.5L16 7.5V14.5L14 15.5Z" fill="#c8c8c8" stroke="#666" stroke-width="0.8"/><rect x="6" y="10.5" width="3.3" height="5" fill="#f2c230" stroke="#8a6d10" stroke-width="0.6"/></svg>
<svg style="left:205px;top:259px" width="18" height="18" viewBox="0 0 18 18"><rect x="1" y="1.5" width="6" height="7" fill="#dfe9f5" stroke="#3a4a66" stroke-width="1"/><rect x="1" y="10" width="6" height="6.5" fill="#dfe9f5" stroke="#3a4a66" stroke-width="1"/><rect x="9" y="1.5" width="7" height="5" fill="#f8f8f8" stroke="#3a4a66" stroke-width="1"/><rect x="9.5" y="8" width="7.5" height="9" rx="1" fill="#fff" stroke="#3a4a66" stroke-width="1"/><rect x="11" y="9.5" width="4.5" height="2" fill="#2f6fbf"/><path d="M11 14H15M13.5 12.7L15 14L13.5 15.3" stroke="#3a4a66" stroke-width="0.8" fill="none"/></svg>
<svg style="left:30px;top:200px" width="30" height="42" viewBox="30 200 30 42"><path d="M30 232.5H44.5V217L40 206H30Z" fill="#efefef" stroke="#666" stroke-width="1"/><path d="M40 204.5L52.5 216L48.5 219.5L38 208Z" fill="#a2a2a2" stroke="#666" stroke-width="0.9"/><path d="M44.5 219L50 215V227.5L44.5 232.5Z" fill="#b9b9b9" stroke="#666" stroke-width="0.9"/></svg>
<svg style="left:0px;top:0px" width="1896" height="42" viewBox="0 0 1896 42"><rect x="33" y="-3" width="10" height="14" fill="#fff" stroke="#2c2f55" stroke-width="1.4"/><path d="M36 5H42M36 8H42" stroke="#2c2f55" stroke-width="1.2"/><path d="M57.5 10.2V-2H66L68 0.5H72V4" fill="#fcfcfc" stroke="#3a3a3a" stroke-width="1.2"/><path d="M57.5 10.2L61 4H72.6L68.6 10.2Z" fill="#fcfcfc" stroke="#3a3a3a" stroke-width="1.2" stroke-linejoin="round"/><path d="M82.6 -2H95.5V11H84.5L82.6 9.2Z" fill="#5c5c5c" stroke="#3a3a3a" stroke-width="1"/><rect x="85.6" y="-2" width="7" height="6.6" fill="#fcfcfc"/><rect x="85" y="8.4" width="8.4" height="2.8" fill="#fcfcfc"/><path d="M106 1L110 -1.5L114.5 1V6L110 8.5L106 6Z M110 -1.5V4 M113 -3L117.5 -1V5" fill="#e2e2e2" stroke="#bdbdbd" stroke-width="1"/><path d="M113 7.5A3.6 3.6 0 1 1 119.5 9.5" fill="none" stroke="#b5b5b5" stroke-width="1.3"/><path d="M112 10L114.5 7L111.5 6.5Z" fill="#b5b5b5"/><path d="M127.25 3.5H133.75L130.5 7.1Z" fill="#222"/><path d="M141.8 4.8L149.5 -1.2V2.2C154.5 2.2 157 4.8 156.8 9.2C155 6.6 152.8 6.2 149.5 6.4V9.6Z" fill="#fcfcfc" stroke="#3a3a3a" stroke-width="1.1" stroke-linejoin="round"/><path d="M163.35 2.8H169.85L166.6 6.3999999999999995Z" fill="#222"/><path d="M192.2 4.8L184.5 -1.2V2.2C179.5 2.2 177 4.8 177.2 9.2C179 6.6 181.2 6.2 184.5 6.4V9.6Z" fill="#e6e6e6" stroke="#c0c0c0" stroke-width="1.1" stroke-linejoin="round"/><path d="M199.25 2.8H205.75L202.5 6.3999999999999995Z" fill="#8a8a8a"/><rect x="216.8" y="-2" width="9" height="5" fill="#fcfcfc" stroke="#555" stroke-width="1"/><rect x="213.4" y="2.2" width="15.8" height="7.4" rx="1" fill="#6a6a6a"/><rect x="217" y="7.2" width="8.6" height="4.8" fill="#4a9ee8" stroke="#fcfcfc" stroke-width="1.2"/><path d="M237.2 -2H250V12.4H237.2Z" fill="#cf4b4d"/><path d="M239.5 5H247.5M239.5 7.5H243M239.5 10H243" stroke="#fff" stroke-width="1.3"/><rect x="244.3" y="6.6" width="3.4" height="4" fill="#fff"/><path d="M245 -2H252.5V2L249 0.8L246.5 2.6Z" fill="#2f8be6"/><rect x="260" y="0" width="1" height="15.5" fill="#b0b0b0"/><path d="M268.4 8.5V1.2H282.6V3" fill="none" stroke="#3a3a3a" stroke-width="1.3"/><path d="M268.4 -1V1.2M275 -1V1.2M282.6 -1V1.2" stroke="#3a3a3a" stroke-width="1"/><path d="M278.2 4.2H283.2L282.4 7.2H284.2V9H277.2V7.2H279Z" fill="#f5a21b"/><path d="M280.7 9V13" stroke="#a06a10" stroke-width="1.1"/><rect x="291" y="0" width="1" height="15.5" fill="#b0b0b0"/><rect x="299" y="5.8" width="15" height="4" fill="#f2a313"/><path d="M301.5 8.5V9.8M304 8.5V9.8M306.5 8.5V9.8M309 8.5V9.8M311.5 8.5V9.8" stroke="#8a5a00" stroke-width="0.7"/><path d="M299.5 -1V4.6M313.5 -1V4.6M299.5 2.2H313.5" stroke="#3a3a3a" stroke-width="1.1" fill="none"/><path d="M321.05 3.6000000000000005H327.55L324.3 7.2Z" fill="#222"/><path d="M336 -1L348.8 9.8M346 12L351 7.2" stroke="#b3b3b3" stroke-width="1.1" fill="none"/><circle cx="369" cy="3.6" r="4.2" fill="none" stroke="#b3b3b3" stroke-width="1"/><path d="M368.3 2L369.6 1.4V6" stroke="#b3b3b3" stroke-width="0.9" fill="none"/><path d="M364.8 5.4H361.2V8.4" fill="none" stroke="#b3b3b3" stroke-width="1"/><rect x="360" y="8.2" width="2.6" height="2.6" fill="#e2e2e2" stroke="#aaa" stroke-width="0.8"/><path d="M385.2 11L390.8 -3L396.6 11M387.4 6H394.4" stroke="#9d9d9d" stroke-width="1.6" fill="none"/><rect x="406.2" y="0" width="1" height="15.5" fill="#b0b0b0"/><path d="M415.5 5.2L421.5 -0.8L426 4.8V11H415.5Z" fill="#f8f8f8" stroke="#3a3a3a" stroke-width="1.2" stroke-linejoin="round"/><path d="M421.5 -0.8L423.5 -2L428.6 4L426 4.8Z" fill="#8f8f8f" stroke="#3a3a3a" stroke-width="0.9"/><path d="M426 4.8L428.6 4V9.8L426 11Z" fill="#bdbdbd" stroke="#3a3a3a" stroke-width="0.8"/><rect x="418.6" y="6.4" width="3" height="4.6" fill="#f2c230" stroke="#7a5d08" stroke-width="0.6"/><path d="M436.25 3.6000000000000005H442.75L439.5 7.2Z" fill="#222"/><circle cx="456" cy="4.4" r="4.6" fill="#e4e4e4" stroke="#b0b0b0" stroke-width="1.1"/><path d="M460.5 1.6L464 4.4L460.5 7.2Z" fill="#b9b9b9"/><path d="M456 9V12.5" stroke="#b0b0b0" stroke-width="1.1"/><path d="M474 1.5H479.5M474 5.9H478.5M474 10H477.5" stroke="#444" stroke-width="2"/><path d="M483.5 1.5H490M482 5.9H490M481 10H490" stroke="#8a8a8a" stroke-width="1.2"/><path d="M483.4 -1L478.6 12.4" stroke="#2d8fe8" stroke-width="1.4"/><rect x="497" y="0" width="1" height="15.5" fill="#b0b0b0"/><path d="M506 -1H515V3M508.5 2.5H518V10.5H508.5Z" fill="#e4e4e4" stroke="#b8b8b8" stroke-width="1"/><path d="M510.5 5H514M510.5 7.5H513" stroke="#b0b0b0" stroke-width="1"/><path d="M515 6.5L520.5 12M520.5 6.5L515 12" stroke="#b0b0b0" stroke-width="1.6"/><path d="M529.5 -2V4.5H535M537 -2H542V2" fill="none" stroke="#3a3a3a" stroke-width="1.2"/><rect x="535.6" y="4.8" width="9.4" height="6.6" fill="#fcfcfc" stroke="#3a3a3a" stroke-width="1.2"/><path d="M535.6 5.6H545" stroke="#3a3a3a" stroke-width="1.8"/><path d="M529.6 8V10.6H533.5M532 9L533.8 10.6L532 12.2" fill="none" stroke="#3a3a3a" stroke-width="1"/><path d="M549.45 3.6000000000000005H555.95L552.7 7.2Z" fill="#222"/><path d="M563.6 1.4H572.6" stroke="#222" stroke-width="1.4"/><path d="M563.6 3.6999999999999997H572.6L568.1 7.9Z" fill="#222"/><rect x="1178.5" y="28.6" width="13.6" height="7.4" rx="2" fill="#fcfcfc" stroke="#2c2f55" stroke-width="1.2"/><path d="M1182.8 34L1185.3 30.8L1187.8 34Z" fill="#2c2f55"/><path d="M1197.0 31.5H1202.0L1199.5 34.5Z" fill="#222"/><path d="M1542.4 1.6V9L1538.6 5.3Z" fill="#222"/><path d="M1552 11.5V4.5L1554 -1H1557L1558 4.5V11.5Z M1560 11.5V4.5L1561 -1H1564L1566 4.5V11.5Z" fill="#fcfcfc" stroke="#3a3a3a" stroke-width="1.2" stroke-linejoin="round"/><rect x="1556.5" y="1" width="5" height="3.4" fill="#3a3a3a"/><path d="M1552 4.8H1558M1560 4.8H1566" stroke="#3a3a3a" stroke-width="1.4"/><path d="M1575.5 12.2C1576 8.8 1579 8.4 1580.6 6.6C1578.6 4 1578.8 -2.5 1583 -2.5C1587.2 -2.5 1587.4 4 1585.4 6.6C1587 8.4 1590 8.8 1590.6 12.2Z" fill="#5b8ff0" stroke="#2f5fc0" stroke-width="0.9"/><path d="M1680.65 3.6999999999999997H1686.15L1683.4 6.9Z" fill="#333"/><path d="M1697.5 -1.5H1700L1702.5 7H1711L1713 0.5H1701" fill="none" stroke="#3f51a0" stroke-width="1.3" stroke-linejoin="round"/><path d="M1703.5 2.5V5M1706.5 2.5V5M1709.5 2.5V5" stroke="#6a78b8" stroke-width="0.9"/><circle cx="1704" cy="9.6" r="1.5" fill="#fcfcfc" stroke="#3f51a0" stroke-width="1"/><circle cx="1710" cy="9.6" r="1.5" fill="#fcfcfc" stroke="#3f51a0" stroke-width="1"/><rect x="1722" y="0" width="1" height="13.5" fill="#b5b5b5"/><circle cx="1739.6" cy="4.6" r="7.8" fill="#fcfcfc" stroke="#333" stroke-width="1.2"/><text x="1736.2" y="9.6" font-family="Liberation Sans, sans-serif" font-weight="700" font-size="13" fill="#2f4fc0">?</text><path d="M1754.95 3.6999999999999997H1760.45L1757.7 6.9Z" fill="#333"/><path d="M1826 9.6H1833.6" stroke="#222" stroke-width="1.8"/><rect x="1850.2" y="-3" width="9.6" height="12.6" fill="none" stroke="#222" stroke-width="1.2"/><path d="M1849.6 0.2H1860.4" stroke="#222" stroke-width="2"/><path d="M1875 -2.2L1885.4 9M1885.4 -2.2L1875 9" stroke="#222" stroke-width="2"/></svg>
<div style="left:0px;top:0px;width:38px;height:951px;background:#000;"></div>
</body></html>
